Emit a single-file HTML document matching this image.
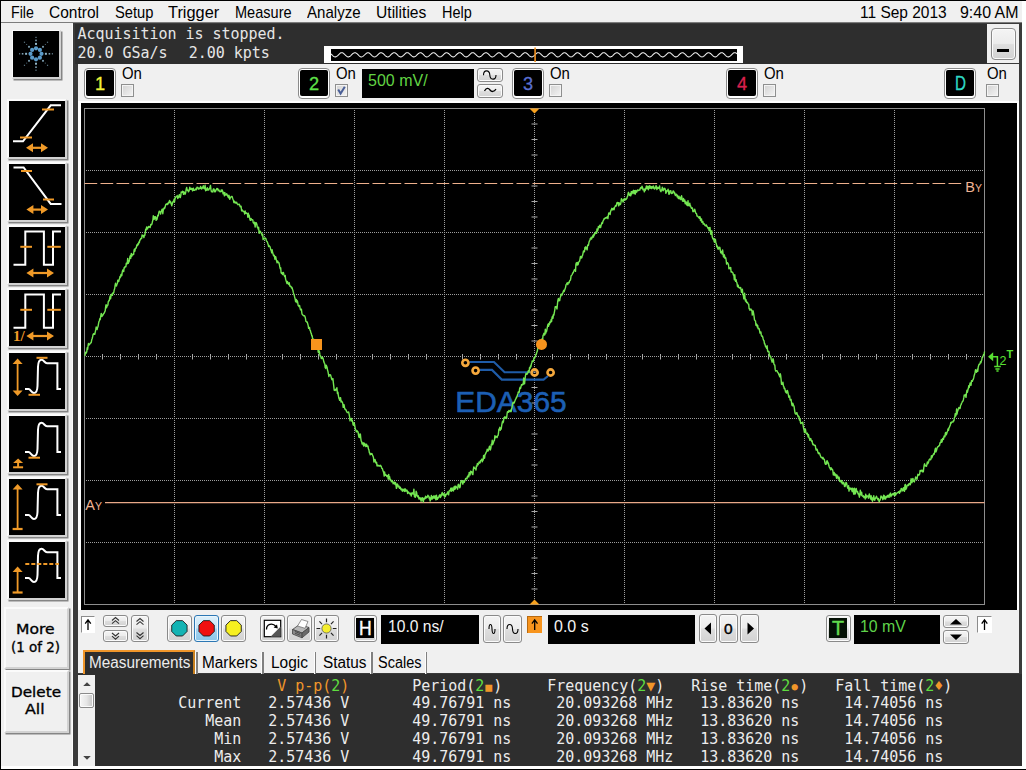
<!DOCTYPE html>
<html lang="en"><head><meta charset="utf-8"><title>Oscilloscope</title>
<style>
*{box-sizing:border-box;margin:0;padding:0}
html,body{width:1026px;height:770px;overflow:hidden;background:#f0f0f0}
body{position:relative;font-family:"Liberation Sans","DejaVu Sans",sans-serif;color:#000;font-size:15px}
.a{position:absolute}
.t{position:absolute;white-space:pre;line-height:1}
.mono{font-family:"DejaVu Sans Mono","Liberation Mono",monospace;font-size:15px;letter-spacing:-0.03px}
.btn{position:absolute;border:1px solid #8a8a8a;border-radius:3px;background:linear-gradient(#f4f4f4 0%,#ececec 48%,#dedede 52%,#d2d2d2 100%);box-shadow:inset 0 0 0 1px #fbfbfb}
.ch{position:absolute;width:32px;height:31px;border:1px solid #8a8a8a;border-radius:4px;background:#fff}
.ch i{position:absolute;left:1px;top:1px;width:28px;height:26px;background:#000;border-radius:2px}
.ch b{position:absolute;left:0;top:3px;width:30px;text-align:center;font-weight:normal;font-size:19px;line-height:22px}
.cb{position:absolute;width:13px;height:13px;border:1px solid #8e8f8f;background:linear-gradient(135deg,#d2d2d2,#f4f4f4);box-shadow:inset 0 0 0 1px #f4f4f4}
.ic{position:absolute;left:7px;width:60px;height:60px;border-left:2px solid #fbfbfb;border-top:2px solid #fbfbfb;border-right:2px solid #d2d2d2;border-bottom:2px solid #d2d2d2;background:#000;box-shadow:1.5px 1.5px 0 #858585}
.ic svg{position:absolute;left:0;top:0}
.sb{position:absolute;left:4px;width:65px;border-left:2px solid #fbfbfb;border-top:2px solid #fbfbfb;border-right:2px solid #d2d2d2;border-bottom:2px solid #d2d2d2;background:#f0f0f0;box-shadow:1.5px 1.5px 0 #858585}
.fld{position:absolute;background:#000;white-space:pre;font-size:16.5px;line-height:1}
.tab{position:absolute;top:650px;height:24px;border-right:2px solid #9a9a9a;font-size:15.5px;line-height:1;white-space:pre}
</style></head>
<body>
<div class="a" style="left:0px;top:0px;width:1026px;height:1px;background:#000;"></div>
<div class="a" style="left:0px;top:0px;width:1px;height:770px;background:#000;"></div>
<div class="a" style="left:0px;top:769px;width:1026px;height:1px;background:#000;"></div>
<div class="a" style="left:1px;top:22px;width:1025px;height:1px;background:#7c7c7c;"></div>
<span class="t" style="left:10.50px;top:3px;font-size:16.2px;color:#000;font-family:'Liberation Sans',sans-serif;line-height:18px;transform:scaleX(0.8775);transform-origin:0 0;">File</span>
<span class="t" style="left:48.70px;top:3px;font-size:16.2px;color:#000;font-family:'Liberation Sans',sans-serif;line-height:18px;transform:scaleX(0.9573);transform-origin:0 0;">Control</span>
<span class="t" style="left:114.50px;top:3px;font-size:16.2px;color:#000;font-family:'Liberation Sans',sans-serif;line-height:18px;transform:scaleX(0.9095);transform-origin:0 0;">Setup</span>
<span class="t" style="left:168.10px;top:3px;font-size:16.2px;color:#000;font-family:'Liberation Sans',sans-serif;line-height:18px;transform:scaleX(1.0097);transform-origin:0 0;">Trigger</span>
<span class="t" style="left:234.70px;top:3px;font-size:16.2px;color:#000;font-family:'Liberation Sans',sans-serif;line-height:18px;transform:scaleX(0.8979);transform-origin:0 0;">Measure</span>
<span class="t" style="left:306.60px;top:3px;font-size:16.2px;color:#000;font-family:'Liberation Sans',sans-serif;line-height:18px;transform:scaleX(0.9299);transform-origin:0 0;">Analyze</span>
<span class="t" style="left:375.60px;top:3px;font-size:16.2px;color:#000;font-family:'Liberation Sans',sans-serif;line-height:18px;transform:scaleX(0.9653);transform-origin:0 0;">Utilities</span>
<span class="t" style="left:441.90px;top:3px;font-size:16.2px;color:#000;font-family:'Liberation Sans',sans-serif;line-height:18px;transform:scaleX(0.8913);transform-origin:0 0;">Help</span>
<span class="t" style="left:860.10px;top:3px;font-size:16.2px;color:#000;font-family:'Liberation Sans',sans-serif;line-height:18px;transform:scaleX(0.9571);transform-origin:0 0;">11 Sep 2013</span>
<span class="t" style="left:959.50px;top:3px;font-size:16.2px;color:#000;font-family:'Liberation Sans',sans-serif;line-height:18px;transform:scaleX(0.9842);transform-origin:0 0;">9:40 AM</span>
<div class="a" style="left:73px;top:23px;width:949px;height:743px;background:#3a3a3a;"></div>
<div class="a" style="left:75px;top:24px;width:912px;height:40px;background:#2e2e2e;"></div>
<div class="a" style="left:987px;top:24px;width:32px;height:38.5px;background:#f0f0f0;"></div>
<div class="a" style="left:1022px;top:1px;width:4px;height:768px;background:#fff;"></div>
<div class="a" style="left:1px;top:766px;width:1025px;height:3px;background:#fff;"></div>
<span class="t" style="left:77.5px;top:25px;font-size:15px;color:#e6e6e6;font-family:'DejaVu Sans Mono','Liberation Mono',monospace;line-height:18px;letter-spacing:-0.03px;">Acquisition is stopped.</span>
<span class="t" style="left:77.5px;top:44px;font-size:15px;color:#e6e6e6;font-family:'DejaVu Sans Mono','Liberation Mono',monospace;line-height:18px;letter-spacing:-0.03px;">20.0 GSa/s</span>
<span class="t" style="left:188.7px;top:44px;font-size:15px;color:#e6e6e6;font-family:'DejaVu Sans Mono','Liberation Mono',monospace;line-height:18px;letter-spacing:-0.03px;">2.00 kpts</span>
<div class="a" style="left:324px;top:46px;width:419px;height:16.5px;background:#fff;"></div>
<div class="a" style="left:331px;top:49px;width:406px;height:11.5px;background:#000;"></div>
<svg class="a" style="left:0;top:0" width="1026" height="70"><polyline points="331.0,53.88 331.5,54.35 332.0,54.85 332.5,55.35 333.0,55.81 333.5,56.22 334.0,56.55 334.5,56.77 335.0,56.89 335.5,56.88 336.0,56.76 336.5,56.52 337.0,56.18 337.5,55.77 338.0,55.30 338.5,54.80 339.0,54.30 339.5,53.83 340.0,53.42 340.5,53.08 341.0,52.84 341.5,52.72 342.0,52.71 342.5,52.83 343.0,53.05 343.5,53.38 344.0,53.79 344.5,54.25 345.0,54.75 345.5,55.25 346.0,55.72 346.5,56.15 347.0,56.49 347.5,56.74 348.0,56.87 348.5,56.89 349.0,56.79 349.5,56.58 350.0,56.26 350.5,55.86 351.0,55.40 351.5,54.90 352.0,54.40 352.5,53.92 353.0,53.49 353.5,53.14 354.0,52.88 354.5,52.73 355.0,52.70 355.5,52.79 356.0,53.00 356.5,53.31 357.0,53.70 357.5,54.16 358.0,54.65 358.5,55.15 359.0,55.63 359.5,56.07 360.0,56.43 360.5,56.70 361.0,56.86 361.5,56.90 362.0,56.82 362.5,56.63 363.0,56.33 363.5,55.94 364.0,55.49 364.5,55.00 365.0,54.50 365.5,54.01 366.0,53.57 366.5,53.20 367.0,52.93 367.5,52.75 368.0,52.70 368.5,52.77 369.0,52.95 369.5,53.24 370.0,53.62 370.5,54.06 371.0,54.55 371.5,55.05 372.0,55.54 372.5,55.98 373.0,56.36 373.5,56.65 374.0,56.83 374.5,56.90 375.0,56.85 375.5,56.67 376.0,56.40 376.5,56.03 377.0,55.59 377.5,55.10 378.0,54.60 378.5,54.11 379.0,53.66 379.5,53.27 380.0,52.97 380.5,52.78 381.0,52.70 381.5,52.74 382.0,52.90 382.5,53.17 383.0,53.53 383.5,53.97 384.0,54.45 384.5,54.95 385.0,55.44 385.5,55.90 386.0,56.29 386.5,56.60 387.0,56.81 387.5,56.90 388.0,56.87 388.5,56.72 389.0,56.46 389.5,56.11 390.0,55.68 390.5,55.20 391.0,54.70 391.5,54.20 392.0,53.74 392.5,53.34 393.0,53.02 393.5,52.81 394.0,52.71 394.5,52.73 395.0,52.86 395.5,53.11 396.0,53.45 396.5,53.88 397.0,54.35 397.5,54.85 398.0,55.35 398.5,55.81 399.0,56.22 399.5,56.55 400.0,56.77 400.5,56.89 401.0,56.88 401.5,56.76 402.0,56.52 402.5,56.18 403.0,55.77 403.5,55.30 404.0,54.80 404.5,54.30 405.0,53.83 405.5,53.42 406.0,53.08 406.5,52.84 407.0,52.72 407.5,52.71 408.0,52.83 408.5,53.05 409.0,53.38 409.5,53.79 410.0,54.25 410.5,54.75 411.0,55.25 411.5,55.72 412.0,56.15 412.5,56.49 413.0,56.74 413.5,56.87 414.0,56.89 414.5,56.79 415.0,56.58 415.5,56.26 416.0,55.86 416.5,55.40 417.0,54.90 417.5,54.40 418.0,53.92 418.5,53.49 419.0,53.14 419.5,52.88 420.0,52.73 420.5,52.70 421.0,52.79 421.5,53.00 422.0,53.31 422.5,53.70 423.0,54.16 423.5,54.65 424.0,55.15 424.5,55.63 425.0,56.07 425.5,56.43 426.0,56.70 426.5,56.86 427.0,56.90 427.5,56.82 428.0,56.63 428.5,56.33 429.0,55.94 429.5,55.49 430.0,55.00 430.5,54.50 431.0,54.01 431.5,53.57 432.0,53.20 432.5,52.93 433.0,52.75 433.5,52.70 434.0,52.77 434.5,52.95 435.0,53.24 435.5,53.62 436.0,54.06 436.5,54.55 437.0,55.05 437.5,55.54 438.0,55.98 438.5,56.36 439.0,56.65 439.5,56.83 440.0,56.90 440.5,56.85 441.0,56.67 441.5,56.40 442.0,56.03 442.5,55.59 443.0,55.10 443.5,54.60 444.0,54.11 444.5,53.66 445.0,53.27 445.5,52.97 446.0,52.78 446.5,52.70 447.0,52.74 447.5,52.90 448.0,53.17 448.5,53.53 449.0,53.97 449.5,54.45 450.0,54.95 450.5,55.44 451.0,55.90 451.5,56.29 452.0,56.60 452.5,56.81 453.0,56.90 453.5,56.87 454.0,56.72 454.5,56.46 455.0,56.11 455.5,55.68 456.0,55.20 456.5,54.70 457.0,54.20 457.5,53.74 458.0,53.34 458.5,53.02 459.0,52.81 459.5,52.71 460.0,52.73 460.5,52.86 461.0,53.11 461.5,53.45 462.0,53.88 462.5,54.35 463.0,54.85 463.5,55.35 464.0,55.81 464.5,56.22 465.0,56.55 465.5,56.77 466.0,56.89 466.5,56.88 467.0,56.76 467.5,56.52 468.0,56.18 468.5,55.77 469.0,55.30 469.5,54.80 470.0,54.30 470.5,53.83 471.0,53.42 471.5,53.08 472.0,52.84 472.5,52.72 473.0,52.71 473.5,52.83 474.0,53.05 474.5,53.38 475.0,53.79 475.5,54.25 476.0,54.75 476.5,55.25 477.0,55.72 477.5,56.15 478.0,56.49 478.5,56.74 479.0,56.87 479.5,56.89 480.0,56.79 480.5,56.58 481.0,56.26 481.5,55.86 482.0,55.40 482.5,54.90 483.0,54.40 483.5,53.92 484.0,53.49 484.5,53.14 485.0,52.88 485.5,52.73 486.0,52.70 486.5,52.79 487.0,53.00 487.5,53.31 488.0,53.70 488.5,54.16 489.0,54.65 489.5,55.15 490.0,55.63 490.5,56.07 491.0,56.43 491.5,56.70 492.0,56.86 492.5,56.90 493.0,56.82 493.5,56.63 494.0,56.33 494.5,55.94 495.0,55.49 495.5,55.00 496.0,54.50 496.5,54.01 497.0,53.57 497.5,53.20 498.0,52.93 498.5,52.75 499.0,52.70 499.5,52.77 500.0,52.95 500.5,53.24 501.0,53.62 501.5,54.06 502.0,54.55 502.5,55.05 503.0,55.54 503.5,55.98 504.0,56.36 504.5,56.65 505.0,56.83 505.5,56.90 506.0,56.85 506.5,56.67 507.0,56.40 507.5,56.03 508.0,55.59 508.5,55.10 509.0,54.60 509.5,54.11 510.0,53.66 510.5,53.27 511.0,52.97 511.5,52.78 512.0,52.70 512.5,52.74 513.0,52.90 513.5,53.17 514.0,53.53 514.5,53.97 515.0,54.45 515.5,54.95 516.0,55.44 516.5,55.90 517.0,56.29 517.5,56.60 518.0,56.81 518.5,56.90 519.0,56.87 519.5,56.72 520.0,56.46 520.5,56.11 521.0,55.68 521.5,55.20 522.0,54.70 522.5,54.20 523.0,53.74 523.5,53.34 524.0,53.02 524.5,52.81 525.0,52.71 525.5,52.73 526.0,52.86 526.5,53.11 527.0,53.45 527.5,53.88 528.0,54.35 528.5,54.85 529.0,55.35 529.5,55.81 530.0,56.22 530.5,56.55 531.0,56.77 531.5,56.89 532.0,56.88 532.5,56.76 533.0,56.52 533.5,56.18 534.0,55.77 534.5,55.30 535.0,54.80 535.5,54.30 536.0,53.83 536.5,53.42 537.0,53.08 537.5,52.84 538.0,52.72 538.5,52.71 539.0,52.83 539.5,53.05 540.0,53.38 540.5,53.79 541.0,54.25 541.5,54.75 542.0,55.25 542.5,55.72 543.0,56.15 543.5,56.49 544.0,56.74 544.5,56.87 545.0,56.89 545.5,56.79 546.0,56.58 546.5,56.26 547.0,55.86 547.5,55.40 548.0,54.90 548.5,54.40 549.0,53.92 549.5,53.49 550.0,53.14 550.5,52.88 551.0,52.73 551.5,52.70 552.0,52.79 552.5,53.00 553.0,53.31 553.5,53.70 554.0,54.16 554.5,54.65 555.0,55.15 555.5,55.63 556.0,56.07 556.5,56.43 557.0,56.70 557.5,56.86 558.0,56.90 558.5,56.82 559.0,56.63 559.5,56.33 560.0,55.94 560.5,55.49 561.0,55.00 561.5,54.50 562.0,54.01 562.5,53.57 563.0,53.20 563.5,52.93 564.0,52.75 564.5,52.70 565.0,52.77 565.5,52.95 566.0,53.24 566.5,53.62 567.0,54.06 567.5,54.55 568.0,55.05 568.5,55.54 569.0,55.98 569.5,56.36 570.0,56.65 570.5,56.83 571.0,56.90 571.5,56.85 572.0,56.67 572.5,56.40 573.0,56.03 573.5,55.59 574.0,55.10 574.5,54.60 575.0,54.11 575.5,53.66 576.0,53.27 576.5,52.97 577.0,52.78 577.5,52.70 578.0,52.74 578.5,52.90 579.0,53.17 579.5,53.53 580.0,53.97 580.5,54.45 581.0,54.95 581.5,55.44 582.0,55.90 582.5,56.29 583.0,56.60 583.5,56.81 584.0,56.90 584.5,56.87 585.0,56.72 585.5,56.46 586.0,56.11 586.5,55.68 587.0,55.20 587.5,54.70 588.0,54.20 588.5,53.74 589.0,53.34 589.5,53.02 590.0,52.81 590.5,52.71 591.0,52.73 591.5,52.86 592.0,53.11 592.5,53.45 593.0,53.88 593.5,54.35 594.0,54.85 594.5,55.35 595.0,55.81 595.5,56.22 596.0,56.55 596.5,56.77 597.0,56.89 597.5,56.88 598.0,56.76 598.5,56.52 599.0,56.18 599.5,55.77 600.0,55.30 600.5,54.80 601.0,54.30 601.5,53.83 602.0,53.42 602.5,53.08 603.0,52.84 603.5,52.72 604.0,52.71 604.5,52.83 605.0,53.05 605.5,53.38 606.0,53.79 606.5,54.25 607.0,54.75 607.5,55.25 608.0,55.72 608.5,56.15 609.0,56.49 609.5,56.74 610.0,56.87 610.5,56.89 611.0,56.79 611.5,56.58 612.0,56.26 612.5,55.86 613.0,55.40 613.5,54.90 614.0,54.40 614.5,53.92 615.0,53.49 615.5,53.14 616.0,52.88 616.5,52.73 617.0,52.70 617.5,52.79 618.0,53.00 618.5,53.31 619.0,53.70 619.5,54.16 620.0,54.65 620.5,55.15 621.0,55.63 621.5,56.07 622.0,56.43 622.5,56.70 623.0,56.86 623.5,56.90 624.0,56.82 624.5,56.63 625.0,56.33 625.5,55.94 626.0,55.49 626.5,55.00 627.0,54.50 627.5,54.01 628.0,53.57 628.5,53.20 629.0,52.93 629.5,52.75 630.0,52.70 630.5,52.77 631.0,52.95 631.5,53.24 632.0,53.62 632.5,54.06 633.0,54.55 633.5,55.05 634.0,55.54 634.5,55.98 635.0,56.36 635.5,56.65 636.0,56.83 636.5,56.90 637.0,56.85 637.5,56.67 638.0,56.40 638.5,56.03 639.0,55.59 639.5,55.10 640.0,54.60 640.5,54.11 641.0,53.66 641.5,53.27 642.0,52.97 642.5,52.78 643.0,52.70 643.5,52.74 644.0,52.90 644.5,53.17 645.0,53.53 645.5,53.97 646.0,54.45 646.5,54.95 647.0,55.44 647.5,55.90 648.0,56.29 648.5,56.60 649.0,56.81 649.5,56.90 650.0,56.87 650.5,56.72 651.0,56.46 651.5,56.11 652.0,55.68 652.5,55.20 653.0,54.70 653.5,54.20 654.0,53.74 654.5,53.34 655.0,53.02 655.5,52.81 656.0,52.71 656.5,52.73 657.0,52.86 657.5,53.11 658.0,53.45 658.5,53.88 659.0,54.35 659.5,54.85 660.0,55.35 660.5,55.81 661.0,56.22 661.5,56.55 662.0,56.77 662.5,56.89 663.0,56.88 663.5,56.76 664.0,56.52 664.5,56.18 665.0,55.77 665.5,55.30 666.0,54.80 666.5,54.30 667.0,53.83 667.5,53.42 668.0,53.08 668.5,52.84 669.0,52.72 669.5,52.71 670.0,52.83 670.5,53.05 671.0,53.38 671.5,53.79 672.0,54.25 672.5,54.75 673.0,55.25 673.5,55.72 674.0,56.15 674.5,56.49 675.0,56.74 675.5,56.87 676.0,56.89 676.5,56.79 677.0,56.58 677.5,56.26 678.0,55.86 678.5,55.40 679.0,54.90 679.5,54.40 680.0,53.92 680.5,53.49 681.0,53.14 681.5,52.88 682.0,52.73 682.5,52.70 683.0,52.79 683.5,53.00 684.0,53.31 684.5,53.70 685.0,54.16 685.5,54.65 686.0,55.15 686.5,55.63 687.0,56.07 687.5,56.43 688.0,56.70 688.5,56.86 689.0,56.90 689.5,56.82 690.0,56.63 690.5,56.33 691.0,55.94 691.5,55.49 692.0,55.00 692.5,54.50 693.0,54.01 693.5,53.57 694.0,53.20 694.5,52.93 695.0,52.75 695.5,52.70 696.0,52.77 696.5,52.95 697.0,53.24 697.5,53.62 698.0,54.06 698.5,54.55 699.0,55.05 699.5,55.54 700.0,55.98 700.5,56.36 701.0,56.65 701.5,56.83 702.0,56.90 702.5,56.85 703.0,56.67 703.5,56.40 704.0,56.03 704.5,55.59 705.0,55.10 705.5,54.60 706.0,54.11 706.5,53.66 707.0,53.27 707.5,52.97 708.0,52.78 708.5,52.70 709.0,52.74 709.5,52.90 710.0,53.17 710.5,53.53 711.0,53.97 711.5,54.45 712.0,54.95 712.5,55.44 713.0,55.90 713.5,56.29 714.0,56.60 714.5,56.81 715.0,56.90 715.5,56.87 716.0,56.72 716.5,56.46 717.0,56.11 717.5,55.68 718.0,55.20 718.5,54.70 719.0,54.20 719.5,53.74 720.0,53.34 720.5,53.02 721.0,52.81 721.5,52.71 722.0,52.73 722.5,52.86 723.0,53.11 723.5,53.45 724.0,53.88 724.5,54.35 725.0,54.85 725.5,55.35 726.0,55.81 726.5,56.22 727.0,56.55 727.5,56.77 728.0,56.89 728.5,56.88 729.0,56.76 729.5,56.52 730.0,56.18 730.5,55.77 731.0,55.30 731.5,54.80 732.0,54.30 732.5,53.83 733.0,53.42 733.5,53.08 734.0,52.84 734.5,52.72 735.0,52.71 735.5,52.83 736.0,53.05 736.5,53.38 737.0,53.79" fill="none" stroke="#f0f0f0" stroke-width="1.05"/><rect x="534.3" y="47.5" width="1.6" height="14.5" fill="#f09020"/></svg>
<div class="btn" style="left:991px;top:28px;width:25px;height:32px;border-radius:4px"></div>
<div class="a" style="left:997px;top:49px;width:12px;height:3px;background:#000;"></div>
<div class="a" style="left:72px;top:24px;width:1px;height:742px;background:#fbfbfb;"></div>
<div class="ic" style="left:12px;top:30px;width:49px;height:49px;border-left-width:1px;border-top-width:1px"><svg width="47" height="47" viewBox="0 0 47 47"><circle cx="23.00" cy="17.30" r="2.1" fill="#5b9bc9"/><circle cx="19.11" cy="18.91" r="2.1" fill="#5b9bc9"/><circle cx="17.50" cy="22.80" r="2.1" fill="#5b9bc9"/><circle cx="19.11" cy="26.69" r="2.1" fill="#5b9bc9"/><circle cx="23.00" cy="28.30" r="2.1" fill="#5b9bc9"/><circle cx="26.89" cy="26.69" r="2.1" fill="#5b9bc9"/><circle cx="28.50" cy="22.80" r="2.1" fill="#5b9bc9"/><circle cx="26.89" cy="18.91" r="2.1" fill="#5b9bc9"/><rect x="22.00" y="11.90" width="2.0" height="2.0" fill="#8fb4c6"/><rect x="22.20" y="8.60" width="1.6" height="1.6" fill="#7fa0b2"/><rect x="22.40" y="5.80" width="1.2" height="1.2" fill="#6b8797"/><rect x="15.10" y="14.90" width="1.8" height="1.8" fill="#7fa0b2"/><rect x="13.17" y="12.97" width="1.0" height="1.0" fill="#4c6572"/><rect x="10.87" y="10.67" width="1.2" height="1.2" fill="#5c7684"/><rect x="12.10" y="21.80" width="2.0" height="2.0" fill="#8fb4c6"/><rect x="8.80" y="22.00" width="1.6" height="1.6" fill="#7fa0b2"/><rect x="6.00" y="22.20" width="1.2" height="1.2" fill="#6b8797"/><rect x="15.10" y="28.90" width="1.8" height="1.8" fill="#7fa0b2"/><rect x="13.17" y="31.63" width="1.0" height="1.0" fill="#4c6572"/><rect x="10.87" y="33.73" width="1.2" height="1.2" fill="#5c7684"/><rect x="22.00" y="31.70" width="2.0" height="2.0" fill="#8fb4c6"/><rect x="22.20" y="35.40" width="1.6" height="1.6" fill="#7fa0b2"/><rect x="22.40" y="38.60" width="1.2" height="1.2" fill="#6b8797"/><rect x="29.10" y="28.90" width="1.8" height="1.8" fill="#7fa0b2"/><rect x="31.83" y="31.63" width="1.0" height="1.0" fill="#4c6572"/><rect x="33.93" y="33.73" width="1.2" height="1.2" fill="#5c7684"/><rect x="31.90" y="21.80" width="2.0" height="2.0" fill="#8fb4c6"/><rect x="35.60" y="22.00" width="1.6" height="1.6" fill="#7fa0b2"/><rect x="38.80" y="22.20" width="1.2" height="1.2" fill="#6b8797"/><rect x="29.10" y="14.90" width="1.8" height="1.8" fill="#7fa0b2"/><rect x="31.83" y="12.97" width="1.0" height="1.0" fill="#4c6572"/><rect x="33.93" y="10.67" width="1.2" height="1.2" fill="#5c7684"/></svg></div>
<div class="ic" style="top:99px"><svg width="56" height="55" viewBox="0 0 56 55"><path d="M4 40.3H14L41.7 4.3H52" stroke="#fff" stroke-width="2" fill="none" stroke-linejoin="miter"/><path d="M33 8.5H45" stroke="#f09a28" stroke-width="2" fill="none"/><path d="M11 36.5H23" stroke="#f09a28" stroke-width="2" fill="none"/><path d="M23 46.8H33" stroke="#f09a28" stroke-width="2.2" fill="none"/><path d="M17 46.8L24 42.3V51.3Z M39 46.8L32 42.3V51.3Z" fill="#f09a28"/></svg></div>
<div class="ic" style="top:162px"><svg width="56" height="55" viewBox="0 0 56 55"><path d="M4.5 3.4H14.6L41.7 39.9H52.5" stroke="#fff" stroke-width="2" fill="none" stroke-linejoin="miter"/><path d="M12 7H23" stroke="#f09a28" stroke-width="2" fill="none"/><path d="M34 35.5H45" stroke="#f09a28" stroke-width="2" fill="none"/><path d="M23.4 45.6H33" stroke="#f09a28" stroke-width="2.2" fill="none"/><path d="M17.4 45.6L24.4 41.1V50.1Z M39 45.6L32 41.1V50.1Z" fill="#f09a28"/></svg></div>
<div class="ic" style="top:225px"><svg width="56" height="55" viewBox="0 0 56 55"><path d="M4.5 37.7H16.3V4.6H34.9V37.7H44V4.6H52" stroke="#fff" stroke-width="2" fill="none" stroke-linejoin="miter"/><path d="M11.3 19.8H23" stroke="#f09a28" stroke-width="2" fill="none"/><path d="M38.3 19.8H51.8" stroke="#f09a28" stroke-width="2" fill="none"/><path d="M23.4 46H39" stroke="#f09a28" stroke-width="2.2" fill="none"/><path d="M17.4 46L24.4 41.5V50.5Z M45 46L38 41.5V50.5Z" fill="#f09a28"/></svg></div>
<div class="ic" style="top:288px"><svg width="56" height="55" viewBox="0 0 56 55"><path d="M4.5 37.7H16.3V4.6H34.9V37.7H44V4.6H52" stroke="#fff" stroke-width="2" fill="none" stroke-linejoin="miter"/><path d="M11.3 19.8H23" stroke="#f09a28" stroke-width="2" fill="none"/><path d="M38.3 19.8H51.8" stroke="#f09a28" stroke-width="2" fill="none"/><path d="M23.4 46H39" stroke="#f09a28" stroke-width="2.2" fill="none"/><path d="M17.4 46L24.4 41.5V50.5Z M45 46L38 41.5V50.5Z" fill="#f09a28"/><text x="4" y="51" font-family="Liberation Serif,serif" font-weight="bold" font-size="15" fill="#f09a28">1/</text></svg></div>
<div class="ic" style="top:351px"><svg width="56" height="55" viewBox="0 0 56 55"><path d="M16 36 H19.5 C21.5 36 22.5 40 25 40 C27.5 40 28.3 38 28.5 33 L29 14 C29.2 8 30.5 6.7 32.5 6.7 C35 6.7 35.5 10.3 38 10.3 H48.4 V36 H52" stroke="#fff" stroke-width="2" fill="none" stroke-linejoin="miter"/><path d="M27.5 4.8H38.5" stroke="#f09a28" stroke-width="2" fill="none"/><path d="M19.5 41.8H31" stroke="#f09a28" stroke-width="2" fill="none"/><path d="M8.6 9.5V40" stroke="#f09a28" stroke-width="1.8" fill="none"/><path d="M8.6 5.5L3.5999999999999996 11.0H13.6Z" fill="#f09a28"/><path d="M8.6 43L3.6 37.5H13.6Z" fill="#f09a28"/></svg></div>
<div class="ic" style="top:414px"><svg width="56" height="55" viewBox="0 0 56 55"><path d="M16 36 H19.5 C21.5 36 22.5 40 25 40 C27.5 40 28.3 38 28.5 33 L29 14 C29.2 8 30.5 6.7 32.5 6.7 C35 6.7 35.5 10.3 38 10.3 H48.4 V36 H52" stroke="#fff" stroke-width="2" fill="none" stroke-linejoin="miter"/><path d="M19.5 41.7H31" stroke="#f09a28" stroke-width="2" fill="none"/><path d="M9.1 42.5L4.1 47H14.1Z" fill="#f09a28"/><path d="M9.1 46V51" stroke="#f09a28" stroke-width="2" fill="none"/><path d="M4.1 51.3H14.1" stroke="#f09a28" stroke-width="2" fill="none"/></svg></div>
<div class="ic" style="top:477px"><svg width="56" height="55" viewBox="0 0 56 55"><path d="M16 36 H19.5 C21.5 36 22.5 40 25 40 C27.5 40 28.3 38 28.5 33 L29 14 C29.2 8 30.5 6.7 32.5 6.7 C35 6.7 35.5 10.3 38 10.3 H48.4 V36 H52" stroke="#fff" stroke-width="2" fill="none" stroke-linejoin="miter"/><path d="M27.5 5.3H38.5" stroke="#f09a28" stroke-width="2" fill="none"/><path d="M8.6 9V50" stroke="#f09a28" stroke-width="1.8" fill="none"/><path d="M8.6 5L3.5999999999999996 10.5H13.6Z" fill="#f09a28"/><path d="M3.5999999999999996 50H13.6" stroke="#f09a28" stroke-width="2.2" fill="none"/></svg></div>
<div class="ic" style="top:540px"><svg width="56" height="55" viewBox="0 0 56 55"><path d="M16 36 H19.5 C21.5 36 22.5 40 25 40 C27.5 40 28.3 38 28.5 33 L29 14 C29.2 8 30.5 6.7 32.5 6.7 C35 6.7 35.5 10.3 38 10.3 H48.4 V36 H52" stroke="#fff" stroke-width="2" fill="none" stroke-linejoin="miter"/><path d="M16.3 22H50" stroke="#f09a28" stroke-width="2" stroke-dasharray="4 2" fill="none"/><path d="M8.6 28.5V50.5" stroke="#f09a28" stroke-width="1.8" fill="none"/><path d="M8.6 24.5L3.5999999999999996 30.0H13.6Z" fill="#f09a28"/><path d="M3.5999999999999996 50.5H13.6" stroke="#f09a28" stroke-width="2.2" fill="none"/></svg></div>
<div class="sb" style="top:607px;height:62px"></div>
<div class="sb" style="top:670px;height:63px"></div>
<span class="t" style="left:16.0px;top:621px;font-size:14.3px;color:#000;font-family:'DejaVu Sans','Liberation Sans',sans-serif;transform:scaleX(1.0889);transform-origin:0 0;line-height:16px;-webkit-text-stroke:0.35px #000;">More</span>
<span class="t" style="left:11.0px;top:639px;font-size:14.3px;color:#000;font-family:'DejaVu Sans','Liberation Sans',sans-serif;transform:scaleX(0.9382);transform-origin:0 0;line-height:16px;-webkit-text-stroke:0.35px #000;">(1 of 2)</span>
<span class="t" style="left:11.0px;top:684px;font-size:14.3px;color:#000;font-family:'DejaVu Sans','Liberation Sans',sans-serif;transform:scaleX(1.0642);transform-origin:0 0;line-height:16px;-webkit-text-stroke:0.35px #000;">Delete</span>
<span class="t" style="left:25.0px;top:701px;font-size:14.3px;color:#000;font-family:'DejaVu Sans','Liberation Sans',sans-serif;transform:scaleX(1.1056);transform-origin:0 0;line-height:16px;-webkit-text-stroke:0.35px #000;">All</span>
<div class="a" style="left:78px;top:64px;width:941px;height:37px;background:#f0f0f0;"></div>
<div class="ch" style="left:84px;top:68px"><i></i></div>
<span class="t" style="left:94.9px;top:74px;font-size:18.2px;color:#f2f23a;font-family:'Liberation Sans',sans-serif;line-height:20px;-webkit-text-stroke:0.3px #f2f23a;">1</span>
<span class="t" style="left:121.90px;top:64px;font-size:16.6px;color:#000;font-family:'Liberation Sans',sans-serif;line-height:19px;transform:scaleX(0.8986);transform-origin:0 0;">On</span>
<div class="cb" style="left:121px;top:84px"></div>
<div class="ch" style="left:298px;top:68px"><i></i></div>
<span class="t" style="left:308.9px;top:74px;font-size:18.2px;color:#5fe048;font-family:'Liberation Sans',sans-serif;line-height:20px;-webkit-text-stroke:0.3px #5fe048;">2</span>
<span class="t" style="left:335.90px;top:64px;font-size:16.6px;color:#000;font-family:'Liberation Sans',sans-serif;line-height:19px;transform:scaleX(0.8986);transform-origin:0 0;">On</span>
<div class="cb" style="left:335px;top:84px"><svg width="11" height="11" viewBox="0 0 11 11" style="position:absolute;left:0;top:0"><path d="M2.2 4.6L4.6 8.6L8.8 1.8" stroke="#4a5f97" stroke-width="2" fill="none"/></svg></div>
<div class="ch" style="left:512px;top:68px"><i></i></div>
<span class="t" style="left:522.9px;top:74px;font-size:18.2px;color:#5a6fd0;font-family:'Liberation Sans',sans-serif;line-height:20px;-webkit-text-stroke:0.3px #5a6fd0;">3</span>
<span class="t" style="left:549.90px;top:64px;font-size:16.6px;color:#000;font-family:'Liberation Sans',sans-serif;line-height:19px;transform:scaleX(0.8986);transform-origin:0 0;">On</span>
<div class="cb" style="left:549px;top:84px"></div>
<div class="ch" style="left:726px;top:68px"><i></i></div>
<span class="t" style="left:736.9px;top:74px;font-size:18.2px;color:#d8204c;font-family:'Liberation Sans',sans-serif;line-height:20px;-webkit-text-stroke:0.3px #d8204c;">4</span>
<span class="t" style="left:763.90px;top:64px;font-size:16.6px;color:#000;font-family:'Liberation Sans',sans-serif;line-height:19px;transform:scaleX(0.8986);transform-origin:0 0;">On</span>
<div class="cb" style="left:763px;top:84px"></div>
<div class="ch" style="left:944px;top:68px"><i></i></div>
<span class="t" style="left:954.60px;top:72px;font-size:19.5px;color:#2fd8c4;font-family:'Liberation Sans',sans-serif;line-height:22px;transform:scaleX(0.7813);transform-origin:0 0;-webkit-text-stroke:0.3px #2fd8c4;">D</span>
<span class="t" style="left:986.90px;top:64px;font-size:16.6px;color:#000;font-family:'Liberation Sans',sans-serif;line-height:19px;transform:scaleX(0.8986);transform-origin:0 0;">On</span>
<div class="cb" style="left:986px;top:84px"></div>
<div class="a" style="left:362px;top:69px;width:112px;height:29px;background:#000;"></div>
<span class="t" style="left:367.80px;top:71px;font-size:16.3px;color:#62d444;font-family:'Liberation Sans',sans-serif;line-height:18px;transform:scaleX(0.9835);transform-origin:0 0;">500 mV/</span>
<div class="btn" style="left:477px;top:68px;width:26px;height:14px;border-radius:3px"></div>
<div class="btn" style="left:477px;top:84px;width:26px;height:14px;border-radius:3px"></div>
<svg class="a" style="left:477px;top:68px" width="26" height="30" viewBox="0 0 26 30"><path d="M6.5 7.2C6.5 1.5 12.5 1.5 12.8 7 C13.1 12.5 19 12.5 19 7" stroke="#000" stroke-width="1.1" fill="none"/><path d="M7.5 23C9.5 19.5 11.5 20 13 22 C14.5 24 17 24.2 19 21.2" stroke="#000" stroke-width="1.3" fill="none"/></svg>
<div class="a" style="left:78px;top:101px;width:941px;height:2px;background:#fff;"></div>
<div class="a" style="left:78px;top:103px;width:3px;height:507px;background:#fff;"></div>
<div class="a" style="left:1017px;top:103px;width:2px;height:507px;background:#fff;"></div>
<div class="a" style="left:80.5px;top:102.5px;width:936.5px;height:507px;background:#000;"></div>
<svg class="a" style="left:0;top:0" width="1026" height="620" viewBox="0 0 1026 620"><g stroke="#9e9e9e" stroke-width="1" stroke-dasharray="1 1" fill="none"><path d="M174.5 110.0V604.5"/><path d="M264.5 110.0V604.5"/><path d="M354.5 110.0V604.5"/><path d="M444.5 110.0V604.5"/><path d="M534.5 110.0V604.5"/><path d="M624.5 110.0V604.5"/><path d="M714.5 110.0V604.5"/><path d="M804.5 110.0V604.5"/><path d="M894.5 110.0V604.5"/><path d="M86.0 170.5H984.5"/><path d="M86.0 232.5H984.5"/><path d="M86.0 294.5H984.5"/><path d="M86.0 356.5H984.5"/><path d="M86.0 418.5H984.5"/><path d="M86.0 480.5H984.5"/><path d="M86.0 542.5H984.5"/></g><path d="M102.5 354.0v5.5M120.5 354.0v5.5M138.5 354.0v5.5M156.5 354.0v5.5M192.5 354.0v5.5M210.5 354.0v5.5M228.5 354.0v5.5M246.5 354.0v5.5M282.5 354.0v5.5M300.5 354.0v5.5M318.5 354.0v5.5M336.5 354.0v5.5M372.5 354.0v5.5M390.5 354.0v5.5M408.5 354.0v5.5M426.5 354.0v5.5M462.5 354.0v5.5M480.5 354.0v5.5M498.5 354.0v5.5M516.5 354.0v5.5M552.5 354.0v5.5M570.5 354.0v5.5M588.5 354.0v5.5M606.5 354.0v5.5M642.5 354.0v5.5M660.5 354.0v5.5M678.5 354.0v5.5M696.5 354.0v5.5M732.5 354.0v5.5M750.5 354.0v5.5M768.5 354.0v5.5M786.5 354.0v5.5M822.5 354.0v5.5M840.5 354.0v5.5M858.5 354.0v5.5M876.5 354.0v5.5M912.5 354.0v5.5M930.5 354.0v5.5M948.5 354.0v5.5M966.5 354.0v5.5M531.5 124.0h6M531.5 139.5h6M531.5 155.0h6M531.5 186.0h6M531.5 201.5h6M531.5 217.0h6M531.5 248.0h6M531.5 263.5h6M531.5 279.0h6M531.5 310.0h6M531.5 325.5h6M531.5 341.0h6M531.5 372.0h6M531.5 387.5h6M531.5 403.0h6M531.5 434.0h6M531.5 449.5h6M531.5 465.0h6M531.5 496.0h6M531.5 511.5h6M531.5 527.0h6M531.5 558.0h6M531.5 573.5h6M531.5 589.0h6" stroke="#a8a8a8" stroke-width="1" fill="none"/><rect x="84.5" y="108.5" width="900" height="496" fill="none" stroke="#8e8e8e" stroke-width="1"/><path d="M84.5 183.5H962" stroke="#eeb08c" stroke-width="1.2" stroke-dasharray="12.7 3.3" fill="none"/><path d="M105 502.6H984.5" stroke="#e8a888" stroke-width="1.3" fill="none"/><text x="965.3" y="192" font-family="Liberation Sans,sans-serif" font-size="14.5" fill="#f0b494">B<tspan font-size="10.5">Y</tspan></text><text x="85.3" y="510" font-family="Liberation Sans,sans-serif" font-size="14.5" fill="#f0b494">A<tspan font-size="10.5">Y</tspan></text><g fill="none" stroke="#1f5ca8" stroke-width="2.1" stroke-linejoin="miter"><path d="M469.5 362H494L504.6 372.2H530.5"/><path d="M479.8 369.9H492L501.8 379.6H543.6L548 376"/></g><circle cx="465.4" cy="362.8" r="3.1" fill="none" stroke="#f5a83c" stroke-width="2.6"/><circle cx="475.6" cy="370.6" r="3.1" fill="none" stroke="#f5a83c" stroke-width="2.6"/><circle cx="534.6" cy="372.5" r="3.1" fill="none" stroke="#f5a83c" stroke-width="2.6"/><circle cx="550.6" cy="372.5" r="3.1" fill="none" stroke="#f5a83c" stroke-width="2.6"/><text x="0" y="0" transform="translate(455.3 412) scale(1.0148 1)" font-family="Liberation Sans,sans-serif" font-size="29.5" fill="#1c5fb4" stroke="#1c5fb4" stroke-width="0.6">EDA365</text><polyline fill="none" stroke="#74e652" stroke-width="1.4" stroke-linejoin="round" points="84.5,355.6 85.0,355.5 85.4,352.8 85.8,352.2 86.3,353.1 86.8,351.6 87.2,347.7 87.7,349.3 88.1,345.5 88.5,343.4 89.0,345.0 89.5,344.4 89.9,344.0 90.3,343.3 90.8,342.7 91.2,342.7 91.7,339.8 92.2,338.5 92.6,336.9 93.0,334.9 93.5,333.8 94.0,334.2 94.4,333.4 94.8,334.3 95.3,331.9 95.8,329.4 96.2,326.9 96.7,328.7 97.1,329.5 97.5,327.6 98.0,326.7 98.5,323.9 98.9,321.7 99.3,321.0 99.8,318.7 100.2,319.7 100.7,316.3 101.2,313.5 101.6,314.0 102.0,316.5 102.5,315.7 103.0,315.0 103.4,314.2 103.8,313.4 104.3,313.0 104.8,311.6 105.2,310.9 105.7,306.2 106.1,304.6 106.5,307.7 107.0,306.2 107.5,305.5 107.9,305.1 108.3,301.5 108.8,300.7 109.2,300.8 109.7,298.2 110.2,296.0 110.6,298.7 111.0,296.2 111.5,294.1 112.0,295.0 112.4,295.3 112.8,293.0 113.3,293.3 113.8,292.4 114.2,289.9 114.7,288.5 115.1,285.3 115.5,283.3 116.0,285.9 116.5,286.1 116.9,284.1 117.3,283.9 117.8,280.2 118.2,280.9 118.7,281.5 119.2,279.4 119.6,278.6 120.0,276.4 120.5,277.2 121.0,274.5 121.4,274.7 121.8,275.7 122.3,271.7 122.8,270.0 123.2,270.6 123.7,271.6 124.1,267.6 124.5,268.0 125.0,266.6 125.5,266.6 125.9,266.7 126.3,263.2 126.8,264.1 127.2,263.7 127.7,258.4 128.2,263.4 128.6,262.3 129.1,261.6 129.5,259.7 129.9,256.8 130.4,255.6 130.8,258.2 131.3,253.5 131.8,256.2 132.2,255.2 132.7,254.3 133.1,254.5 133.6,254.6 134.0,250.8 134.4,249.3 134.9,251.2 135.3,248.6 135.8,248.0 136.2,248.1 136.7,245.6 137.2,244.6 137.6,245.5 138.1,243.5 138.5,244.2 138.9,241.9 139.4,242.4 139.8,239.9 140.3,239.9 140.8,238.5 141.2,238.7 141.7,238.3 142.1,234.9 142.6,236.0 143.0,235.8 143.4,235.5 143.9,237.5 144.3,235.3 144.8,235.5 145.2,232.9 145.7,229.2 146.2,229.9 146.6,227.0 147.1,228.0 147.5,229.1 147.9,227.7 148.4,226.4 148.8,227.3 149.3,226.7 149.8,227.0 150.2,227.4 150.7,224.5 151.1,224.9 151.6,224.8 152.0,223.8 152.4,221.8 152.9,220.0 153.3,215.8 153.8,218.0 154.2,219.3 154.7,216.7 155.2,218.2 155.6,216.7 156.1,220.4 156.5,218.2 156.9,219.6 157.4,217.5 157.8,215.2 158.3,215.8 158.8,212.6 159.2,211.2 159.7,211.7 160.1,211.5 160.6,214.1 161.0,212.1 161.4,211.3 161.9,209.7 162.3,209.0 162.8,213.7 163.2,210.7 163.7,208.7 164.2,207.7 164.6,208.5 165.1,207.1 165.5,205.3 165.9,204.3 166.4,204.5 166.8,203.7 167.3,204.5 167.8,204.3 168.2,202.8 168.7,203.0 169.1,201.6 169.6,200.4 170.0,202.7 170.4,201.7 170.9,202.3 171.3,204.2 171.8,205.9 172.2,204.0 172.7,202.5 173.2,201.2 173.6,201.7 174.1,199.3 174.5,202.0 174.9,199.4 175.4,197.2 175.8,196.9 176.3,196.9 176.8,196.8 177.2,195.5 177.7,198.5 178.1,196.9 178.6,197.5 179.0,195.5 179.4,194.6 179.9,196.3 180.3,197.5 180.8,195.4 181.2,192.0 181.7,192.4 182.2,192.4 182.6,191.2 183.1,192.1 183.5,194.4 183.9,191.7 184.4,194.1 184.8,192.8 185.3,194.0 185.8,191.7 186.2,189.0 186.7,187.5 187.1,189.9 187.6,190.4 188.0,190.3 188.4,191.9 188.9,191.2 189.3,190.0 189.8,187.2 190.2,189.2 190.7,189.4 191.2,188.3 191.6,189.2 192.1,188.6 192.5,190.8 192.9,190.1 193.4,188.1 193.8,190.2 194.3,190.2 194.8,190.2 195.2,189.8 195.7,189.3 196.1,188.2 196.6,189.7 197.0,187.3 197.4,187.3 197.9,187.5 198.3,188.2 198.8,189.3 199.2,188.2 199.7,188.4 200.2,188.2 200.6,186.5 201.1,188.7 201.5,189.0 201.9,188.9 202.4,187.3 202.8,188.0 203.3,185.8 203.8,188.2 204.2,188.7 204.7,188.9 205.1,185.3 205.6,190.7 206.0,189.4 206.4,188.9 206.9,190.3 207.3,187.6 207.8,189.8 208.2,189.3 208.7,190.0 209.2,188.5 209.6,188.6 210.1,186.9 210.5,185.5 210.9,189.2 211.4,191.7 211.8,191.4 212.3,191.6 212.8,192.1 213.2,189.3 213.7,188.9 214.1,189.1 214.6,191.7 215.0,190.5 215.4,191.7 215.9,190.2 216.3,189.7 216.8,188.6 217.2,189.3 217.7,188.5 218.2,190.8 218.6,189.8 219.1,190.3 219.5,191.1 219.9,191.7 220.4,191.8 220.8,191.0 221.3,189.9 221.8,191.6 222.2,189.9 222.7,191.4 223.1,193.8 223.6,192.7 224.0,192.4 224.4,195.9 224.9,192.7 225.3,195.0 225.8,194.4 226.2,194.9 226.7,193.7 227.2,194.7 227.6,195.7 228.1,197.0 228.5,197.8 228.9,195.3 229.4,196.9 229.8,199.3 230.3,197.7 230.8,197.1 231.2,196.7 231.7,196.5 232.1,196.5 232.6,198.3 233.0,199.3 233.4,200.0 233.9,202.6 234.3,201.2 234.8,201.6 235.2,203.0 235.7,202.5 236.2,203.0 236.6,202.2 237.1,203.7 237.5,204.0 237.9,204.8 238.4,204.5 238.8,204.2 239.3,204.3 239.8,205.6 240.2,206.8 240.7,206.2 241.1,206.2 241.6,210.9 242.0,209.7 242.4,210.8 242.9,210.9 243.3,211.6 243.8,211.3 244.2,211.6 244.7,214.0 245.2,211.0 245.6,213.3 246.1,212.7 246.5,213.4 246.9,213.6 247.4,213.5 247.8,217.3 248.3,213.2 248.8,216.8 249.2,215.1 249.7,218.4 250.1,220.2 250.6,220.4 251.0,218.5 251.4,219.9 251.9,219.5 252.3,219.8 252.8,219.9 253.2,222.6 253.7,223.0 254.2,223.9 254.6,222.2 255.1,227.0 255.5,224.8 255.9,222.6 256.4,223.1 256.9,224.4 257.3,227.1 257.8,227.5 258.2,229.1 258.6,227.2 259.1,233.3 259.6,232.4 260.0,231.2 260.4,231.4 260.9,232.8 261.4,233.1 261.8,234.2 262.2,235.6 262.7,234.2 263.1,239.6 263.6,238.3 264.1,239.0 264.5,238.7 264.9,237.9 265.4,238.1 265.9,238.7 266.3,240.5 266.8,241.4 267.2,241.6 267.6,242.8 268.1,244.4 268.6,246.5 269.0,245.5 269.4,246.2 269.9,246.5 270.4,248.1 270.8,249.9 271.2,250.3 271.7,252.8 272.1,249.7 272.6,252.6 273.1,254.0 273.5,255.7 273.9,255.0 274.4,255.7 274.9,259.2 275.3,256.7 275.8,256.9 276.2,259.3 276.6,260.9 277.1,262.7 277.6,260.9 278.0,261.9 278.4,262.8 278.9,262.6 279.4,264.7 279.8,266.9 280.2,268.7 280.7,267.9 281.1,273.0 281.6,273.3 282.1,272.5 282.5,274.5 282.9,273.6 283.4,272.5 283.9,274.7 284.3,275.6 284.8,276.7 285.2,275.4 285.6,279.1 286.1,280.7 286.6,282.3 287.0,283.5 287.4,281.4 287.9,282.8 288.4,284.1 288.8,284.5 289.2,282.7 289.7,285.4 290.1,286.4 290.6,286.1 291.1,286.9 291.5,288.0 291.9,287.3 292.4,289.1 292.9,290.4 293.3,292.4 293.8,294.0 294.2,294.8 294.6,296.9 295.1,298.7 295.6,301.7 296.0,300.0 296.4,299.5 296.9,302.6 297.4,300.8 297.8,302.8 298.2,305.6 298.7,305.8 299.1,306.6 299.6,305.5 300.1,308.4 300.5,309.9 300.9,309.1 301.4,309.2 301.9,313.5 302.3,314.5 302.8,314.9 303.2,315.4 303.6,315.8 304.1,315.7 304.6,315.7 305.0,316.7 305.4,318.0 305.9,321.4 306.4,321.6 306.8,322.2 307.2,321.9 307.7,323.7 308.1,325.1 308.6,328.3 309.1,327.9 309.5,327.4 309.9,330.0 310.4,330.7 310.9,332.9 311.3,333.5 311.8,335.8 312.2,335.8 312.6,339.2 313.1,340.1 313.6,339.2 314.0,340.8 314.4,340.4 314.9,341.5 315.4,341.3 315.8,344.1 316.2,345.9 316.7,343.5 317.1,343.6 317.6,345.4 318.1,351.5 318.5,352.7 318.9,350.5 319.4,351.3 319.9,354.7 320.3,356.2 320.8,356.3 321.2,358.3 321.6,358.5 322.1,357.1 322.6,358.5 323.0,358.1 323.4,359.9 323.9,362.1 324.4,363.3 324.8,363.9 325.2,367.7 325.7,368.4 326.1,365.2 326.6,366.1 327.1,367.4 327.5,370.1 327.9,371.2 328.4,374.0 328.9,376.5 329.3,374.9 329.8,374.7 330.2,374.7 330.6,375.1 331.1,376.9 331.6,378.7 332.0,379.8 332.4,379.4 332.9,378.6 333.4,383.2 333.8,386.4 334.2,390.3 334.7,390.1 335.1,390.6 335.6,389.3 336.1,389.9 336.5,389.0 336.9,387.7 337.4,393.5 337.9,392.1 338.3,395.1 338.8,398.0 339.2,398.6 339.6,400.4 340.1,397.8 340.6,397.8 341.0,402.0 341.4,401.0 341.9,401.5 342.4,402.3 342.8,403.6 343.2,407.3 343.7,404.6 344.1,404.9 344.6,408.1 345.1,409.6 345.5,409.3 345.9,409.6 346.4,411.1 346.9,411.9 347.3,412.6 347.8,412.5 348.2,412.4 348.6,411.9 349.1,414.1 349.6,417.0 350.0,420.9 350.4,418.7 350.9,419.6 351.4,418.4 351.8,421.1 352.2,420.1 352.7,422.2 353.1,424.9 353.6,425.3 354.1,422.6 354.5,424.2 354.9,426.7 355.4,429.6 355.9,429.8 356.3,431.8 356.8,431.9 357.2,430.8 357.6,431.5 358.1,432.2 358.6,435.9 359.0,437.2 359.4,437.6 359.9,434.0 360.4,434.2 360.8,438.3 361.2,441.0 361.7,441.9 362.1,444.0 362.6,444.1 363.1,442.7 363.5,445.6 363.9,446.2 364.4,443.2 364.9,445.4 365.3,444.1 365.8,446.5 366.2,444.7 366.6,444.3 367.1,446.5 367.6,446.6 368.0,446.0 368.4,448.8 368.9,449.9 369.4,452.9 369.8,453.1 370.2,454.8 370.7,453.4 371.1,454.4 371.6,453.5 372.1,453.8 372.5,454.9 372.9,455.9 373.4,457.3 373.9,462.0 374.3,460.0 374.8,459.4 375.2,460.0 375.6,462.2 376.1,463.2 376.6,462.3 377.0,465.9 377.4,464.9 377.9,466.0 378.4,465.4 378.8,465.7 379.2,466.0 379.7,466.1 380.1,465.2 380.6,466.1 381.1,466.0 381.5,467.3 381.9,468.4 382.4,468.7 382.9,470.6 383.3,471.3 383.8,473.3 384.2,476.1 384.6,472.0 385.1,475.2 385.6,475.2 386.0,474.7 386.4,475.7 386.9,476.6 387.4,476.0 387.8,475.5 388.2,479.1 388.7,474.4 389.1,478.7 389.6,476.7 390.1,479.8 390.5,479.3 390.9,480.1 391.4,481.8 391.9,481.3 392.3,480.6 392.8,482.2 393.2,483.8 393.6,482.3 394.1,482.0 394.6,483.5 395.0,484.4 395.4,482.4 395.9,484.4 396.4,488.4 396.8,487.6 397.2,483.9 397.7,484.6 398.1,485.6 398.6,487.1 399.1,486.2 399.5,488.3 399.9,487.7 400.4,487.3 400.9,489.6 401.3,489.8 401.8,488.9 402.2,490.9 402.6,491.2 403.1,489.2 403.6,489.7 404.0,490.5 404.4,491.4 404.9,488.8 405.4,489.3 405.8,491.2 406.2,490.8 406.7,490.1 407.1,490.4 407.6,493.5 408.1,492.2 408.5,492.0 408.9,493.1 409.4,493.2 409.9,493.1 410.3,494.6 410.8,493.1 411.2,496.0 411.6,494.0 412.1,492.8 412.6,493.0 413.0,494.1 413.4,493.5 413.9,489.2 414.4,496.5 414.8,495.0 415.2,497.4 415.7,496.4 416.1,491.2 416.6,492.4 417.1,495.6 417.5,495.9 417.9,497.1 418.4,495.8 418.9,499.0 419.3,497.7 419.8,498.9 420.2,497.8 420.6,499.1 421.1,501.2 421.6,498.8 422.0,497.6 422.4,497.9 422.9,500.8 423.4,501.9 423.8,498.1 424.2,499.3 424.7,498.1 425.1,498.7 425.6,496.1 426.1,498.0 426.5,496.9 426.9,497.6 427.4,497.0 427.9,495.2 428.3,496.0 428.8,496.1 429.2,498.7 429.6,497.4 430.1,501.0 430.6,499.5 431.0,498.0 431.4,495.4 431.9,499.1 432.4,498.8 432.8,496.6 433.2,497.6 433.7,495.9 434.1,498.3 434.6,497.2 435.1,495.8 435.5,498.4 435.9,499.9 436.4,495.3 436.9,497.2 437.3,499.4 437.8,498.0 438.2,497.5 438.6,497.8 439.1,495.7 439.6,495.6 440.0,494.6 440.4,497.5 440.9,496.7 441.4,495.0 441.8,494.1 442.2,492.4 442.7,494.9 443.1,495.2 443.6,494.1 444.1,493.6 444.5,497.0 444.9,494.6 445.4,496.6 445.9,494.2 446.3,494.7 446.8,493.8 447.2,494.0 447.6,491.9 448.1,492.2 448.6,494.9 449.0,491.7 449.4,490.5 449.9,490.6 450.4,490.3 450.8,488.2 451.2,491.3 451.7,488.5 452.1,487.9 452.6,490.5 453.1,490.0 453.5,490.9 453.9,487.0 454.4,489.3 454.9,486.1 455.3,489.0 455.8,486.1 456.2,486.7 456.6,487.5 457.1,487.8 457.6,489.2 458.0,485.5 458.4,484.3 458.9,484.9 459.4,487.3 459.8,487.8 460.2,486.8 460.7,482.1 461.1,481.4 461.6,480.5 462.1,482.1 462.5,483.1 462.9,484.2 463.4,480.8 463.9,481.8 464.3,482.3 464.8,480.7 465.2,480.1 465.6,478.6 466.1,478.3 466.6,478.1 467.0,478.9 467.4,476.5 467.9,476.9 468.4,474.9 468.8,476.9 469.2,472.4 469.7,474.1 470.1,475.0 470.6,471.3 471.1,471.4 471.5,472.6 471.9,471.9 472.4,474.3 472.9,474.6 473.3,469.6 473.8,466.9 474.2,467.6 474.6,468.6 475.1,468.4 475.6,468.3 476.0,470.0 476.4,465.9 476.9,466.3 477.4,463.4 477.8,464.9 478.2,464.6 478.7,463.3 479.1,461.9 479.6,463.1 480.1,462.9 480.5,460.7 480.9,460.5 481.4,459.8 481.9,459.1 482.3,461.8 482.8,459.9 483.2,460.1 483.6,455.4 484.1,458.3 484.6,458.1 485.0,454.4 485.4,454.3 485.9,452.9 486.4,451.9 486.8,451.3 487.2,449.2 487.7,449.7 488.1,451.0 488.6,450.2 489.1,447.7 489.5,446.1 489.9,449.2 490.4,449.9 490.9,447.8 491.3,444.4 491.8,444.0 492.2,440.3 492.6,444.8 493.1,443.5 493.6,442.2 494.0,440.4 494.4,440.5 494.9,435.8 495.4,437.7 495.8,436.7 496.2,436.5 496.7,436.7 497.1,437.6 497.6,435.8 498.1,435.5 498.5,432.8 498.9,429.2 499.4,428.8 499.9,427.3 500.3,430.3 500.8,428.7 501.2,429.0 501.6,426.1 502.1,423.2 502.6,421.2 503.0,422.7 503.4,421.8 503.9,417.8 504.4,418.2 504.8,416.8 505.2,417.0 505.7,418.3 506.1,417.6 506.6,418.4 507.1,413.7 507.5,411.6 507.9,411.6 508.4,412.2 508.9,410.5 509.3,411.6 509.8,411.5 510.2,410.7 510.6,410.2 511.1,411.7 511.6,408.7 512.0,407.8 512.5,404.0 512.9,402.6 513.4,403.2 513.8,402.1 514.2,402.9 514.7,401.6 515.1,400.4 515.6,399.1 516.0,398.8 516.5,396.9 517.0,397.1 517.4,394.9 517.9,393.7 518.3,391.9 518.8,392.7 519.2,392.3 519.6,388.9 520.1,387.1 520.5,388.5 521.0,386.7 521.5,384.7 521.9,385.3 522.4,384.3 522.8,383.9 523.2,384.5 523.7,378.0 524.1,382.1 524.6,383.8 525.0,379.3 525.5,375.3 526.0,373.3 526.4,374.4 526.9,373.6 527.3,374.1 527.8,372.6 528.2,370.9 528.6,370.8 529.1,372.2 529.5,367.8 530.0,368.5 530.5,366.0 530.9,366.8 531.4,363.8 531.8,363.0 532.2,360.9 532.7,361.0 533.1,361.5 533.6,360.5 534.0,357.8 534.5,358.3 535.0,356.7 535.4,356.7 535.9,354.3 536.3,354.3 536.8,352.1 537.2,351.7 537.6,349.5 538.1,346.9 538.5,346.6 539.0,343.7 539.5,344.4 539.9,340.0 540.4,341.5 540.8,340.1 541.2,341.9 541.7,339.9 542.1,338.6 542.6,340.3 543.0,335.6 543.5,334.5 544.0,333.3 544.4,335.0 544.9,334.6 545.3,329.2 545.8,333.1 546.2,330.6 546.6,331.5 547.1,328.7 547.5,326.4 548.0,324.1 548.5,326.3 548.9,323.4 549.4,324.7 549.8,322.0 550.2,321.9 550.7,322.4 551.1,319.6 551.6,321.3 552.0,317.8 552.5,316.2 553.0,318.3 553.4,314.5 553.9,315.1 554.3,312.6 554.8,309.8 555.2,306.7 555.6,307.3 556.1,306.5 556.5,307.6 557.0,309.0 557.5,303.6 557.9,300.2 558.4,298.4 558.8,300.9 559.2,299.9 559.7,300.6 560.1,297.8 560.6,296.8 561.0,294.2 561.5,294.5 562.0,295.1 562.4,293.3 562.9,293.0 563.3,291.2 563.8,290.2 564.2,291.5 564.6,290.3 565.1,288.8 565.5,287.6 566.0,284.8 566.5,284.0 566.9,283.1 567.4,282.9 567.8,284.5 568.2,282.5 568.7,282.6 569.1,282.7 569.6,280.9 570.0,280.4 570.5,280.0 571.0,276.3 571.4,275.4 571.9,274.9 572.3,274.3 572.8,272.8 573.2,272.9 573.6,271.5 574.1,270.7 574.5,269.6 575.0,269.5 575.5,271.4 575.9,264.3 576.4,262.7 576.8,263.8 577.2,265.0 577.7,262.4 578.1,264.7 578.6,262.3 579.0,261.7 579.5,261.3 580.0,259.1 580.4,256.7 580.9,256.4 581.3,258.0 581.8,257.9 582.2,255.9 582.6,255.4 583.1,252.9 583.5,251.0 584.0,251.9 584.5,251.4 584.9,247.5 585.4,249.1 585.8,246.8 586.2,248.8 586.7,248.0 587.1,249.8 587.6,245.7 588.0,244.7 588.5,245.2 589.0,242.2 589.4,241.0 589.9,240.3 590.3,238.4 590.8,238.9 591.2,237.1 591.6,239.0 592.1,237.3 592.5,237.2 593.0,235.3 593.5,237.1 593.9,234.2 594.4,235.1 594.8,233.3 595.2,233.6 595.7,231.9 596.1,232.7 596.6,233.2 597.0,228.9 597.5,231.0 598.0,229.6 598.4,226.4 598.9,227.8 599.3,227.5 599.8,225.1 600.2,227.4 600.6,227.5 601.1,225.4 601.5,224.0 602.0,222.5 602.5,223.4 602.9,221.4 603.4,220.2 603.8,219.8 604.2,218.5 604.7,218.7 605.1,218.4 605.6,217.8 606.0,217.8 606.5,218.0 607.0,217.0 607.4,216.8 607.9,218.6 608.3,215.3 608.8,213.0 609.2,213.0 609.6,213.4 610.1,214.6 610.5,211.8 611.0,210.3 611.5,209.4 611.9,208.3 612.4,209.9 612.8,209.5 613.2,208.5 613.7,208.2 614.1,209.7 614.6,207.1 615.0,206.6 615.5,205.6 616.0,206.3 616.4,205.2 616.9,203.0 617.3,202.4 617.8,203.4 618.2,202.7 618.6,205.9 619.1,202.6 619.5,204.8 620.0,204.1 620.5,204.4 620.9,202.6 621.4,198.8 621.8,199.2 622.2,200.6 622.7,200.8 623.1,202.0 623.6,199.3 624.0,200.3 624.5,199.2 625.0,198.5 625.4,199.9 625.9,199.4 626.3,199.1 626.8,198.6 627.2,196.9 627.6,196.3 628.1,193.5 628.5,192.3 629.0,194.2 629.5,195.4 629.9,195.5 630.4,193.7 630.8,195.8 631.2,191.7 631.7,194.0 632.1,191.4 632.6,193.0 633.0,191.7 633.5,190.3 634.0,193.6 634.4,190.7 634.9,190.6 635.3,194.1 635.8,190.4 636.2,191.6 636.6,192.2 637.1,190.9 637.5,189.9 638.0,190.6 638.5,190.6 638.9,190.2 639.4,189.9 639.8,190.1 640.2,188.3 640.7,187.5 641.1,188.5 641.6,187.6 642.0,186.2 642.5,187.5 643.0,189.8 643.4,189.3 643.9,189.4 644.3,191.9 644.8,189.0 645.2,190.5 645.6,188.5 646.1,187.3 646.5,186.0 647.0,188.8 647.5,187.7 647.9,186.1 648.4,189.7 648.8,187.7 649.2,186.3 649.7,185.8 650.1,188.3 650.6,186.5 651.0,186.6 651.5,188.6 652.0,186.7 652.4,187.2 652.9,188.1 653.3,185.9 653.8,187.1 654.2,188.7 654.6,189.1 655.1,187.7 655.5,188.0 656.0,185.6 656.5,186.3 656.9,189.6 657.4,188.3 657.8,187.4 658.2,188.3 658.7,188.3 659.1,187.4 659.6,185.9 660.0,189.6 660.5,190.9 661.0,191.7 661.4,189.9 661.9,189.8 662.3,187.3 662.8,190.5 663.2,190.7 663.6,189.8 664.1,188.2 664.5,188.9 665.0,188.6 665.5,190.5 665.9,193.3 666.4,191.9 666.8,190.8 667.2,190.4 667.7,191.0 668.1,189.3 668.6,192.5 669.0,194.4 669.5,193.5 670.0,190.7 670.4,191.6 670.9,190.8 671.3,193.5 671.8,192.9 672.2,193.2 672.6,192.7 673.1,190.9 673.5,191.1 674.0,191.9 674.5,193.7 674.9,193.1 675.4,195.5 675.8,194.5 676.2,194.3 676.7,194.4 677.1,196.8 677.6,195.6 678.0,197.6 678.5,198.6 679.0,196.3 679.4,198.0 679.9,199.0 680.3,197.3 680.8,199.6 681.2,198.1 681.6,195.8 682.1,198.8 682.5,201.0 683.0,201.3 683.5,198.5 683.9,200.6 684.4,201.6 684.8,200.0 685.2,203.7 685.7,202.8 686.1,201.8 686.6,204.8 687.0,202.6 687.5,205.6 688.0,200.6 688.4,205.3 688.9,204.2 689.3,206.0 689.8,203.1 690.2,205.5 690.6,205.8 691.1,207.8 691.5,208.2 692.0,207.7 692.5,208.3 692.9,211.6 693.4,210.5 693.8,211.5 694.2,210.5 694.7,209.2 695.1,210.7 695.6,212.7 696.0,213.4 696.5,213.6 697.0,216.0 697.4,216.2 697.9,216.2 698.3,217.1 698.8,217.6 699.2,218.2 699.6,216.7 700.1,216.9 700.5,220.6 701.0,219.5 701.5,218.9 701.9,222.3 702.4,222.4 702.8,221.4 703.2,224.1 703.7,223.4 704.1,223.8 704.6,224.1 705.0,225.5 705.5,225.9 706.0,225.8 706.4,224.9 706.9,226.5 707.3,226.8 707.8,227.7 708.2,228.6 708.6,227.6 709.1,230.6 709.5,227.6 710.0,227.5 710.5,232.5 710.9,234.4 711.4,231.0 711.8,230.7 712.2,236.7 712.7,238.2 713.1,239.1 713.6,238.6 714.0,240.9 714.5,242.2 715.0,239.1 715.4,239.3 715.9,243.0 716.3,243.7 716.8,246.8 717.2,245.9 717.6,247.9 718.1,249.3 718.5,247.9 719.0,247.1 719.5,248.7 719.9,247.5 720.4,250.6 720.8,252.9 721.2,252.3 721.7,251.6 722.1,254.0 722.6,249.9 723.0,253.1 723.5,257.0 724.0,255.7 724.4,254.8 724.9,258.2 725.3,257.4 725.8,258.0 726.2,260.5 726.6,264.1 727.1,263.6 727.5,262.7 728.0,263.5 728.5,264.8 728.9,268.7 729.4,267.6 729.8,268.3 730.2,268.9 730.7,267.5 731.1,272.0 731.6,271.8 732.0,271.9 732.5,272.5 733.0,273.0 733.4,275.1 733.9,275.2 734.3,279.8 734.8,274.8 735.2,279.5 735.6,281.3 736.1,279.6 736.5,282.0 737.0,282.9 737.5,286.7 737.9,284.9 738.4,285.8 738.8,287.6 739.2,287.6 739.7,287.6 740.1,288.5 740.6,287.5 741.0,289.1 741.5,292.4 742.0,290.9 742.4,289.2 742.9,294.6 743.3,294.5 743.8,298.8 744.2,296.5 744.6,293.3 745.1,299.0 745.5,301.0 746.0,299.7 746.5,302.5 746.9,302.3 747.4,302.2 747.8,303.3 748.2,304.0 748.7,304.2 749.1,308.7 749.6,308.8 750.0,310.2 750.5,309.5 751.0,309.1 751.4,310.2 751.9,310.1 752.3,315.1 752.8,313.5 753.2,311.0 753.6,313.4 754.1,316.7 754.5,319.9 755.0,320.5 755.5,321.0 755.9,325.3 756.4,323.9 756.8,324.4 757.2,327.0 757.7,325.5 758.1,328.7 758.6,328.4 759.0,328.4 759.5,330.3 760.0,333.1 760.4,331.9 760.9,332.0 761.3,335.2 761.8,336.3 762.2,336.0 762.6,336.6 763.1,338.7 763.5,340.1 764.0,340.7 764.5,343.9 764.9,343.8 765.4,346.2 765.8,346.7 766.2,347.4 766.7,348.5 767.1,345.7 767.6,351.0 768.0,351.8 768.5,351.2 769.0,351.8 769.4,354.8 769.9,356.6 770.3,356.0 770.8,356.6 771.2,359.2 771.6,360.1 772.1,362.2 772.5,360.9 773.0,358.8 773.5,360.5 773.9,364.0 774.4,365.0 774.8,365.0 775.2,369.4 775.7,371.0 776.1,370.6 776.6,370.7 777.0,370.6 777.5,372.2 778.0,372.5 778.4,373.4 778.9,374.7 779.3,375.5 779.8,376.9 780.2,373.6 780.6,374.9 781.1,379.4 781.5,384.2 782.0,383.6 782.5,384.3 782.9,382.1 783.4,386.2 783.8,386.4 784.2,388.6 784.7,388.3 785.1,389.8 785.6,392.1 786.0,390.8 786.5,393.0 787.0,392.7 787.4,390.4 787.9,392.3 788.3,394.3 788.8,397.2 789.2,397.2 789.6,395.9 790.1,400.0 790.5,400.0 791.0,399.4 791.5,402.5 791.9,405.1 792.4,405.7 792.8,403.3 793.2,404.5 793.7,405.9 794.1,406.5 794.6,410.3 795.0,412.9 795.5,413.9 796.0,414.2 796.4,412.8 796.9,412.6 797.3,414.3 797.8,415.6 798.2,416.9 798.6,416.2 799.1,416.8 799.5,420.1 800.0,418.9 800.5,422.7 800.9,423.6 801.4,422.9 801.8,422.7 802.2,423.0 802.7,422.2 803.1,425.3 803.6,428.5 804.0,429.8 804.5,432.5 805.0,430.5 805.4,429.0 805.9,432.4 806.3,433.5 806.8,434.0 807.2,433.1 807.6,433.8 808.1,436.9 808.5,434.6 809.0,438.0 809.5,438.2 809.9,440.3 810.4,438.9 810.8,438.6 811.2,440.3 811.7,441.4 812.1,440.8 812.6,443.8 813.0,444.8 813.5,444.3 814.0,445.1 814.4,445.2 814.9,445.6 815.3,445.4 815.8,448.8 816.2,450.1 816.6,449.4 817.1,449.2 817.5,450.6 818.0,452.7 818.5,453.7 818.9,452.6 819.4,453.6 819.8,453.6 820.2,455.4 820.7,456.5 821.1,457.4 821.6,457.5 822.0,457.7 822.5,458.8 823.0,457.3 823.4,459.0 823.9,459.2 824.3,459.1 824.8,462.0 825.2,463.9 825.6,464.4 826.1,464.4 826.5,462.1 827.0,460.6 827.5,461.4 827.9,463.5 828.4,463.1 828.8,465.3 829.2,466.8 829.7,468.1 830.1,467.9 830.6,469.7 831.0,467.6 831.5,468.7 832.0,469.8 832.4,469.3 832.9,471.1 833.3,474.9 833.8,475.0 834.2,472.5 834.6,474.9 835.1,475.5 835.5,473.9 836.0,475.1 836.5,478.2 836.9,474.9 837.4,477.1 837.8,476.1 838.2,478.9 838.7,478.9 839.1,477.2 839.6,481.2 840.0,481.6 840.5,481.6 841.0,480.4 841.4,482.5 841.9,480.8 842.3,483.9 842.8,483.9 843.2,483.7 843.6,482.3 844.1,483.7 844.5,486.3 845.0,486.6 845.5,484.8 845.9,482.5 846.4,482.6 846.8,484.0 847.2,486.4 847.7,488.1 848.1,488.4 848.6,485.7 849.0,491.1 849.5,487.9 850.0,489.5 850.4,488.3 850.9,488.0 851.3,488.7 851.8,490.3 852.2,491.5 852.6,488.2 853.1,488.8 853.5,493.1 854.0,494.4 854.5,488.1 854.9,491.3 855.4,493.8 855.8,491.2 856.2,488.5 856.7,491.1 857.1,491.9 857.6,491.5 858.0,493.9 858.5,493.6 859.0,495.2 859.4,497.2 859.9,494.5 860.3,490.2 860.8,494.3 861.2,494.9 861.6,492.2 862.1,495.7 862.5,496.1 863.0,496.6 863.5,495.8 863.9,497.5 864.4,497.2 864.8,496.4 865.2,499.0 865.7,494.1 866.1,497.9 866.6,496.8 867.0,495.8 867.5,496.4 868.0,496.0 868.4,498.2 868.9,495.6 869.3,494.0 869.8,496.2 870.2,497.9 870.6,499.1 871.1,495.6 871.5,499.8 872.0,497.5 872.5,501.2 872.9,498.7 873.4,498.7 873.8,495.7 874.2,499.9 874.7,500.3 875.1,498.2 875.6,498.6 876.0,497.3 876.5,496.2 877.0,498.0 877.4,498.1 877.9,499.7 878.3,498.4 878.8,500.4 879.2,501.7 879.6,500.2 880.1,500.0 880.5,498.5 881.0,496.0 881.5,496.6 881.9,497.8 882.4,497.3 882.8,499.7 883.2,498.1 883.7,495.2 884.1,498.9 884.6,496.0 885.0,498.6 885.5,499.0 886.0,496.6 886.4,497.6 886.9,496.7 887.3,495.4 887.8,497.1 888.2,495.5 888.6,495.4 889.1,497.4 889.5,494.4 890.0,494.3 890.5,493.1 890.9,496.7 891.4,494.4 891.8,495.5 892.2,494.7 892.7,493.9 893.1,493.6 893.6,494.7 894.0,493.3 894.5,495.6 895.0,495.6 895.4,492.8 895.9,494.9 896.3,493.6 896.8,493.2 897.2,492.7 897.6,492.9 898.1,492.5 898.5,491.6 899.0,491.8 899.5,493.4 899.9,490.9 900.4,490.3 900.8,491.7 901.2,488.4 901.7,489.3 902.1,489.0 902.6,490.9 903.0,490.3 903.5,487.6 904.0,488.9 904.4,491.4 904.9,485.2 905.3,484.4 905.8,489.6 906.2,488.5 906.6,488.0 907.1,485.1 907.5,485.5 908.0,484.8 908.5,485.5 908.9,483.6 909.4,483.9 909.8,483.3 910.2,484.8 910.7,483.1 911.1,478.8 911.6,480.4 912.0,482.6 912.5,479.2 913.0,478.5 913.4,481.1 913.9,481.4 914.3,481.9 914.8,480.0 915.2,479.4 915.6,477.0 916.1,478.0 916.5,477.6 917.0,479.3 917.5,476.3 917.9,474.3 918.4,475.2 918.8,474.7 919.2,474.9 919.7,473.9 920.1,470.5 920.6,470.5 921.0,471.2 921.5,470.5 922.0,470.1 922.4,471.9 922.9,471.3 923.3,471.8 923.8,467.7 924.2,465.0 924.6,463.8 925.1,465.7 925.5,466.0 926.0,465.7 926.5,466.3 926.9,464.1 927.4,461.9 927.8,463.7 928.2,463.0 928.7,461.5 929.1,459.8 929.6,459.0 930.0,459.3 930.5,459.8 931.0,458.9 931.4,455.8 931.9,457.9 932.3,456.5 932.8,455.2 933.2,454.9 933.6,453.8 934.1,454.3 934.5,452.6 935.0,449.9 935.5,448.1 935.9,452.0 936.4,450.7 936.8,449.3 937.2,447.6 937.7,446.8 938.1,446.7 938.6,446.3 939.0,445.5 939.5,445.5 940.0,442.8 940.4,443.0 940.9,441.9 941.3,439.7 941.8,442.2 942.2,441.3 942.6,438.4 943.1,438.7 943.5,439.4 944.0,436.3 944.5,435.7 944.9,436.9 945.4,432.9 945.8,432.5 946.2,434.9 946.7,433.8 947.1,432.2 947.6,431.0 948.0,428.9 948.5,430.3 949.0,427.7 949.4,427.2 949.9,425.8 950.3,425.1 950.8,422.4 951.2,423.2 951.6,422.3 952.1,421.9 952.5,422.0 953.0,422.1 953.5,420.4 953.9,421.0 954.4,417.9 954.8,417.0 955.2,413.6 955.7,416.1 956.1,414.7 956.6,409.0 957.0,414.0 957.5,411.4 958.0,410.4 958.4,408.7 958.9,407.4 959.3,408.3 959.8,408.6 960.2,408.0 960.6,405.2 961.1,404.8 961.5,403.3 962.0,402.5 962.5,401.3 962.9,401.3 963.4,399.7 963.8,397.7 964.2,395.0 964.7,395.7 965.1,395.6 965.6,394.4 966.0,397.4 966.5,392.9 967.0,390.2 967.4,392.4 967.9,390.0 968.3,388.5 968.8,385.7 969.2,387.5 969.6,385.4 970.1,383.0 970.5,384.6 971.0,385.3 971.5,380.8 971.9,380.9 972.4,381.3 972.8,379.8 973.2,379.6 973.7,377.9 974.1,375.8 974.6,374.3 975.0,372.7 975.5,369.8 976.0,371.2 976.4,372.3 976.9,371.4 977.3,369.1 977.8,371.3 978.2,367.2 978.6,365.8 979.1,364.2 979.5,364.3 980.0,363.7 980.5,361.6 980.9,362.8 981.4,360.9 981.8,359.8 982.2,357.2 982.7,357.2 983.1,355.9 983.6,354.4 984.0,355.1 984.5,351.5"/><rect x="311" y="339" width="11" height="11" fill="#f7941d"/><circle cx="541.5" cy="344.4" r="5.5" fill="#f7941d"/><path d="M529.5 108.5h10l-5 5z M529.5 604.5h10l-5 -5z" fill="#f9a21e"/><path d="M988 356.8L993.2 352.3V361.3Z" fill="#58e032"/><path d="M993 356.8H997.4V366.4 M994.2 366.6h6.6 M995.4 368.9h4.2 M996.4 371h2.2" stroke="#58e032" stroke-width="1.5" fill="none"/><text x="999.6" y="364.6" font-family="Liberation Sans,sans-serif" font-size="12.5" fill="#58e032">2</text><text x="1006.5" y="358.4" font-family="Liberation Sans,sans-serif" font-weight="bold" font-size="11" fill="#58e032">T</text></svg>
<div class="a" style="left:78px;top:609.5px;width:941px;height:63.5px;background:#f0f0f0;"></div>
<div class="a" style="left:81px;top:616px;width:14px;height:17px;background:#fff;border-left:1px solid #8c8c8c;border-top:1px solid #8c8c8c;border-right:1px solid #fff;border-bottom:1px solid #fff"></div>
<div class="btn" style="left:103px;top:615px;width:25px;height:12px;"></div>
<div class="btn" style="left:103px;top:630px;width:25px;height:12px;"></div>
<div class="btn" style="left:131px;top:615px;width:18px;height:27px;"></div>
<div class="btn" style="left:167px;top:615px;width:25px;height:27px;"></div>
<div class="btn" style="left:194px;top:615px;width:25px;height:27px;border-color:#2c77b4;background:linear-gradient(#dff1fb 0%,#c4e3f6 48%,#a4d3f0 52%,#8cc6ea 100%);box-shadow:inset 0 0 0 1px #e9f6fd"></div>
<div class="btn" style="left:221px;top:615px;width:25px;height:27px;"></div>
<div class="btn" style="left:260px;top:615px;width:25px;height:27px;"></div>
<div class="btn" style="left:287px;top:615px;width:25px;height:27px;"></div>
<div class="btn" style="left:314px;top:615px;width:25px;height:27px;"></div>
<div class="btn" style="left:354px;top:615px;width:23px;height:27px;"></div>
<div class="a" style="left:356px;top:618px;width:18px;height:20px;background:#000;"></div>
<span class="t" style="left:358.70px;top:616px;font-size:20.6px;color:#fff;font-family:'Liberation Sans',sans-serif;line-height:23px;transform:scaleX(0.8539);transform-origin:0 0;-webkit-text-stroke:0.45px #fff;">H</span>
<div class="a" style="left:381px;top:615px;width:98px;height:29px;background:#000;"></div>
<span class="t" style="left:387.80px;top:618px;font-size:15.9px;color:#f4f4f4;font-family:'Liberation Sans',sans-serif;line-height:17px;transform:scaleX(0.9846);transform-origin:0 0;">10.0 ns/</span>
<div class="btn" style="left:483px;top:615px;width:18px;height:28px;"></div>
<div class="btn" style="left:503px;top:615px;width:19px;height:28px;"></div>
<div class="a" style="left:527px;top:616px;width:15px;height:17px;background:#f7941d;border-left:1px solid #b86a10;border-top:1px solid #b86a10"></div>
<div class="a" style="left:548px;top:615px;width:147px;height:29px;background:#000;"></div>
<span class="t" style="left:553.70px;top:618px;font-size:15.9px;color:#f4f4f4;font-family:'Liberation Sans',sans-serif;line-height:17px;transform:scaleX(1.0066);transform-origin:0 0;">0.0 s</span>
<div class="btn" style="left:699px;top:614px;width:18px;height:29px;"></div>
<div class="btn" style="left:719px;top:614px;width:19px;height:29px;"></div>
<div class="btn" style="left:740px;top:614px;width:19px;height:29px;"></div>
<span class="t" style="left:724.3px;top:620px;font-size:15px;color:#000;font-family:'Liberation Sans',sans-serif;transform:scaleX(1.0309);transform-origin:0 0;line-height:17px;-webkit-text-stroke:0.4px #000;">0</span>
<div class="btn" style="left:826px;top:615px;width:25px;height:27px;"></div>
<div class="a" style="left:829px;top:618px;width:18px;height:20px;background:#041004;"></div>
<span class="t" style="left:832.00px;top:616px;font-size:20.6px;color:#62dc4e;font-family:'Liberation Sans',sans-serif;line-height:23px;transform:scaleX(0.9613);transform-origin:0 0;-webkit-text-stroke:0.45px #62dc4e;">T</span>
<div class="a" style="left:854px;top:615px;width:86px;height:29px;background:#000;"></div>
<span class="t" style="left:860.40px;top:618px;font-size:15.9px;color:#5fd24a;font-family:'Liberation Sans',sans-serif;line-height:17px;transform:scaleX(0.9989);transform-origin:0 0;">10 mV</span>
<div class="btn" style="left:943px;top:615px;width:26px;height:13px;"></div>
<div class="btn" style="left:943px;top:630px;width:26px;height:14px;"></div>
<div class="a" style="left:977px;top:616px;width:15px;height:17px;background:#fff;border-left:1px solid #8c8c8c;border-top:1px solid #8c8c8c;border-right:1px solid #fff;border-bottom:1px solid #fff"></div>
<svg class="a" style="left:0;top:600px" width="1026" height="60" viewBox="0 600 1026 60"><path d="M88 630V620.5 M85.2 623.6L88 619.8L90.8 623.6" stroke="#000" stroke-width="1.3" fill="none"/><g stroke="#333" stroke-width="1.1" fill="none"><path d="M112 620.5l3.5-3 3.5 3 M112 623.7l3.5-3 3.5 3"/><path d="M112 633l3.5 3 3.5-3 M112 636.2l3.5 3 3.5-3"/><path d="M136.5 621.5l3.5-3 3.5 3 M136.5 624.7l3.5-3 3.5 3"/><path d="M136.5 632.5l3.5 3 3.5-3 M136.5 635.7l3.5 3 3.5-3"/></g><polygon points="187.07,631.48 182.58,635.97 176.22,635.97 171.73,631.48 171.73,625.12 176.22,620.63 182.58,620.63 187.07,625.12" fill="#13b3b3" stroke="#1a1a1a" stroke-width="0.9"/><polygon points="214.27,631.48 209.78,635.97 203.42,635.97 198.93,631.48 198.93,625.12 203.42,620.63 209.78,620.63 214.27,625.12" fill="#f01010" stroke="#1a1a1a" stroke-width="0.9"/><polygon points="241.27,631.48 236.78,635.97 230.42,635.97 225.93,631.48 225.93,625.12 230.42,620.63 236.78,620.63 241.27,625.12" fill="#f7f020" stroke="#1a1a1a" stroke-width="0.9"/><rect x="264.3" y="620.3" width="16.4" height="16.4" fill="#fff" stroke="#000" stroke-width="1.2"/><path d="M280.7 626.5V636.7H270.5Z" fill="#555"/><path d="M266.5 629.5C266.5 624 272.5 622.5 276 626.5" stroke="#000" stroke-width="1.3" fill="none"/><path d="M277.8 628.6L273.6 627.6L277 624.4Z" fill="#000"/><path d="M292.5 629.5L299.5 624.5L309 627.5L302 633Z" fill="#b8b8b8" stroke="#444" stroke-width="0.8"/><path d="M292.5 629.5V634L302 637.8V633Z" fill="#8a8a8a" stroke="#444" stroke-width="0.8"/><path d="M302 633L309 627.5V632L302 637.8Z" fill="#6a6a6a" stroke="#444" stroke-width="0.8"/><path d="M297.5 626L301.5 619.5L308 621.5L305 628.3Z" fill="#fff" stroke="#666" stroke-width="0.7"/><path d="M295 631.5L300.5 633.7 M295 633.2L300.5 635.4" stroke="#333" stroke-width="0.7"/><path d="M332.80 628.50L336.50 628.50M330.95 632.95L333.57 635.57M326.50 634.80L326.50 638.50M322.05 632.95L319.43 635.57M320.20 628.50L316.50 628.50M322.05 624.05L319.43 621.43M326.50 622.20L326.50 618.50M330.95 624.05L333.57 621.43" stroke="#222" stroke-width="1.2" fill="none"/><circle cx="326.5" cy="628.5" r="4.6" fill="#f5ee2e" stroke="#555" stroke-width="0.8"/><path d="M489 629C489 623 491.8 623 492 629S495 635 495 629" stroke="#000" stroke-width="1.1" fill="none"/><path d="M507 629C507 623 512.3 623 512.5 629S518 635 518 629" stroke="#000" stroke-width="1.1" fill="none"/><path d="M534.7 630V620.5 M531.9 623.6L534.7 619.8L537.5 623.6" stroke="#000" stroke-width="1.3" fill="none"/><path d="M704.5 628.5L711 622.5V634.5Z M754 628.5L747.5 622.5V634.5Z" fill="#000"/><path d="M950 624.5L956 619L962 624.5Z M950 634.5L956 640L962 634.5Z" fill="#000"/><path d="M984.5 630V620.5 M981.7 623.6L984.5 619.8L987.3 623.6" stroke="#000" stroke-width="1.3" fill="none"/></svg>
<div class="a" style="left:82.5px;top:650px;width:112px;height:24px;background:#2e2e2e;border:2.5px solid #f0962a;border-bottom:none;border-right-color:#c8801f"></div>
<span class="t" style="left:89px;top:654px;font-size:15.6px;color:#ececec;font-family:'Liberation Sans',sans-serif;transform:scaleX(0.9838);transform-origin:0 0;line-height:17px;">Measurements</span>
<span class="t" style="left:202px;top:654px;font-size:15.6px;color:#000;font-family:'Liberation Sans',sans-serif;transform:scaleX(0.9851);transform-origin:0 0;line-height:17px;">Markers</span>
<span class="t" style="left:271px;top:654px;font-size:15.6px;color:#000;font-family:'Liberation Sans',sans-serif;transform:scaleX(0.9921);transform-origin:0 0;line-height:17px;">Logic</span>
<span class="t" style="left:322.5px;top:654px;font-size:15.6px;color:#000;font-family:'Liberation Sans',sans-serif;transform:scaleX(0.9836);transform-origin:0 0;line-height:17px;">Status</span>
<span class="t" style="left:378px;top:654px;font-size:15.6px;color:#000;font-family:'Liberation Sans',sans-serif;transform:scaleX(0.9290);transform-origin:0 0;line-height:17px;">Scales</span>
<div class="a" style="left:195.0px;top:651.5px;width:1px;height:22.5px;background:#fdfdfd;"></div>
<div class="a" style="left:196.0px;top:651.5px;width:1.5px;height:22.5px;background:#808080;"></div>
<div class="a" style="left:261.0px;top:651.5px;width:1px;height:22.5px;background:#fdfdfd;"></div>
<div class="a" style="left:262.0px;top:651.5px;width:1.5px;height:22.5px;background:#808080;"></div>
<div class="a" style="left:313.5px;top:651.5px;width:1px;height:22.5px;background:#fdfdfd;"></div>
<div class="a" style="left:314.5px;top:651.5px;width:1.5px;height:22.5px;background:#808080;"></div>
<div class="a" style="left:370.0px;top:651.5px;width:1px;height:22.5px;background:#fdfdfd;"></div>
<div class="a" style="left:371.0px;top:651.5px;width:1.5px;height:22.5px;background:#808080;"></div>
<div class="a" style="left:424.5px;top:651.5px;width:1px;height:22.5px;background:#fdfdfd;"></div>
<div class="a" style="left:425.5px;top:651.5px;width:1.5px;height:22.5px;background:#808080;"></div>
<div class="a" style="left:78px;top:674px;width:944px;height:92px;background:#2e2e2e;"></div>
<div class="a" style="left:78px;top:675px;width:17px;height:91px;background:#f0f0f0;"></div>
<svg class="a" style="left:78px;top:675px" width="17" height="91" viewBox="0 0 17 91"><path d="M5.2 11L9 7.2L12.8 11Z M5.2 81L9 84.8L12.8 81Z" fill="#444"/></svg>
<div class="btn" style="left:79px;top:693px;width:15px;height:15px;border-radius:2px;background:linear-gradient(90deg,#f6f6f6 0%,#e6e6e6 50%,#c4c4c4 100%)"></div>
<span class="t" style="left:178.2px;top:694px;font-size:15px;color:#ececec;font-family:'DejaVu Sans Mono','Liberation Mono',monospace;line-height:18px;letter-spacing:-0.03px;">Current</span>
<span class="t" style="left:268.2px;top:694px;font-size:15px;color:#ececec;font-family:'DejaVu Sans Mono','Liberation Mono',monospace;line-height:18px;letter-spacing:-0.03px;">2.57436 V</span>
<span class="t" style="left:412.2px;top:694px;font-size:15px;color:#ececec;font-family:'DejaVu Sans Mono','Liberation Mono',monospace;line-height:18px;letter-spacing:-0.03px;">49.76791 ns</span>
<span class="t" style="left:556.2px;top:694px;font-size:15px;color:#ececec;font-family:'DejaVu Sans Mono','Liberation Mono',monospace;line-height:18px;letter-spacing:-0.03px;">20.093268 MHz</span>
<span class="t" style="left:700.2px;top:694px;font-size:15px;color:#ececec;font-family:'DejaVu Sans Mono','Liberation Mono',monospace;line-height:18px;letter-spacing:-0.03px;">13.83620 ns</span>
<span class="t" style="left:844.2px;top:694px;font-size:15px;color:#ececec;font-family:'DejaVu Sans Mono','Liberation Mono',monospace;line-height:18px;letter-spacing:-0.03px;">14.74056 ns</span>
<span class="t" style="left:205.2px;top:712px;font-size:15px;color:#ececec;font-family:'DejaVu Sans Mono','Liberation Mono',monospace;line-height:18px;letter-spacing:-0.03px;">Mean</span>
<span class="t" style="left:268.2px;top:712px;font-size:15px;color:#ececec;font-family:'DejaVu Sans Mono','Liberation Mono',monospace;line-height:18px;letter-spacing:-0.03px;">2.57436 V</span>
<span class="t" style="left:412.2px;top:712px;font-size:15px;color:#ececec;font-family:'DejaVu Sans Mono','Liberation Mono',monospace;line-height:18px;letter-spacing:-0.03px;">49.76791 ns</span>
<span class="t" style="left:556.2px;top:712px;font-size:15px;color:#ececec;font-family:'DejaVu Sans Mono','Liberation Mono',monospace;line-height:18px;letter-spacing:-0.03px;">20.093268 MHz</span>
<span class="t" style="left:700.2px;top:712px;font-size:15px;color:#ececec;font-family:'DejaVu Sans Mono','Liberation Mono',monospace;line-height:18px;letter-spacing:-0.03px;">13.83620 ns</span>
<span class="t" style="left:844.2px;top:712px;font-size:15px;color:#ececec;font-family:'DejaVu Sans Mono','Liberation Mono',monospace;line-height:18px;letter-spacing:-0.03px;">14.74056 ns</span>
<span class="t" style="left:214.2px;top:730px;font-size:15px;color:#ececec;font-family:'DejaVu Sans Mono','Liberation Mono',monospace;line-height:18px;letter-spacing:-0.03px;">Min</span>
<span class="t" style="left:268.2px;top:730px;font-size:15px;color:#ececec;font-family:'DejaVu Sans Mono','Liberation Mono',monospace;line-height:18px;letter-spacing:-0.03px;">2.57436 V</span>
<span class="t" style="left:412.2px;top:730px;font-size:15px;color:#ececec;font-family:'DejaVu Sans Mono','Liberation Mono',monospace;line-height:18px;letter-spacing:-0.03px;">49.76791 ns</span>
<span class="t" style="left:556.2px;top:730px;font-size:15px;color:#ececec;font-family:'DejaVu Sans Mono','Liberation Mono',monospace;line-height:18px;letter-spacing:-0.03px;">20.093268 MHz</span>
<span class="t" style="left:700.2px;top:730px;font-size:15px;color:#ececec;font-family:'DejaVu Sans Mono','Liberation Mono',monospace;line-height:18px;letter-spacing:-0.03px;">13.83620 ns</span>
<span class="t" style="left:844.2px;top:730px;font-size:15px;color:#ececec;font-family:'DejaVu Sans Mono','Liberation Mono',monospace;line-height:18px;letter-spacing:-0.03px;">14.74056 ns</span>
<span class="t" style="left:214.2px;top:748px;font-size:15px;color:#ececec;font-family:'DejaVu Sans Mono','Liberation Mono',monospace;line-height:18px;letter-spacing:-0.03px;">Max</span>
<span class="t" style="left:268.2px;top:748px;font-size:15px;color:#ececec;font-family:'DejaVu Sans Mono','Liberation Mono',monospace;line-height:18px;letter-spacing:-0.03px;">2.57436 V</span>
<span class="t" style="left:412.2px;top:748px;font-size:15px;color:#ececec;font-family:'DejaVu Sans Mono','Liberation Mono',monospace;line-height:18px;letter-spacing:-0.03px;">49.76791 ns</span>
<span class="t" style="left:556.2px;top:748px;font-size:15px;color:#ececec;font-family:'DejaVu Sans Mono','Liberation Mono',monospace;line-height:18px;letter-spacing:-0.03px;">20.093268 MHz</span>
<span class="t" style="left:700.2px;top:748px;font-size:15px;color:#ececec;font-family:'DejaVu Sans Mono','Liberation Mono',monospace;line-height:18px;letter-spacing:-0.03px;">13.83620 ns</span>
<span class="t" style="left:844.2px;top:748px;font-size:15px;color:#ececec;font-family:'DejaVu Sans Mono','Liberation Mono',monospace;line-height:18px;letter-spacing:-0.03px;">14.74056 ns</span>
<span class="t" style="left:277.2px;top:677px;font-size:15px;color:#f0962a;font-family:'DejaVu Sans Mono','Liberation Mono',monospace;line-height:18px;letter-spacing:-0.03px;">V p-p(</span>
<span class="t" style="left:331.2px;top:677px;font-size:15px;color:#5fdc40;font-family:'DejaVu Sans Mono','Liberation Mono',monospace;line-height:18px;letter-spacing:-0.03px;">2</span>
<span class="t" style="left:340.2px;top:677px;font-size:15px;color:#f0962a;font-family:'DejaVu Sans Mono','Liberation Mono',monospace;line-height:18px;letter-spacing:-0.03px;">)</span>
<span class="t" style="left:412.2px;top:677px;font-size:15px;color:#ececec;font-family:'DejaVu Sans Mono','Liberation Mono',monospace;line-height:18px;letter-spacing:-0.03px;">Period(</span><span class="t" style="left:475.2px;top:677px;font-size:15px;color:#5fdc40;font-family:'DejaVu Sans Mono','Liberation Mono',monospace;line-height:18px;letter-spacing:-0.03px;">2</span><span class="t" style="left:485.3px;top:680px;font-size:11.5px;color:#f0962a;font-family:'DejaVu Sans Mono','Liberation Mono',monospace;line-height:14px;">■</span><span class="t" style="left:493.2px;top:677px;font-size:15px;color:#ececec;font-family:'DejaVu Sans Mono','Liberation Mono',monospace;line-height:18px;letter-spacing:-0.03px;">)</span>
<span class="t" style="left:547.2px;top:677px;font-size:15px;color:#ececec;font-family:'DejaVu Sans Mono','Liberation Mono',monospace;line-height:18px;letter-spacing:-0.03px;">Frequency(</span><span class="t" style="left:637.2px;top:677px;font-size:15px;color:#5fdc40;font-family:'DejaVu Sans Mono','Liberation Mono',monospace;line-height:18px;letter-spacing:-0.03px;">2</span><span class="t" style="left:646.2px;top:677px;font-size:15px;color:#f0962a;font-family:'DejaVu Sans Mono','Liberation Mono',monospace;line-height:18px;letter-spacing:-0.03px;">▼</span><span class="t" style="left:655.2px;top:677px;font-size:15px;color:#ececec;font-family:'DejaVu Sans Mono','Liberation Mono',monospace;line-height:18px;letter-spacing:-0.03px;">)</span>
<span class="t" style="left:691.2px;top:677px;font-size:15px;color:#ececec;font-family:'DejaVu Sans Mono','Liberation Mono',monospace;line-height:18px;letter-spacing:-0.03px;">Rise time(</span><span class="t" style="left:781.2px;top:677px;font-size:15px;color:#5fdc40;font-family:'DejaVu Sans Mono','Liberation Mono',monospace;line-height:18px;letter-spacing:-0.03px;">2</span><span class="t" style="left:791.5px;top:679.5px;font-size:10.5px;color:#f0962a;font-family:'DejaVu Sans Mono','Liberation Mono',monospace;line-height:12px;">●</span><span class="t" style="left:799.2px;top:677px;font-size:15px;color:#ececec;font-family:'DejaVu Sans Mono','Liberation Mono',monospace;line-height:18px;letter-spacing:-0.03px;">)</span>
<span class="t" style="left:835.2px;top:677px;font-size:15px;color:#ececec;font-family:'DejaVu Sans Mono','Liberation Mono',monospace;line-height:18px;letter-spacing:-0.03px;">Fall time(</span><span class="t" style="left:925.2px;top:677px;font-size:15px;color:#5fdc40;font-family:'DejaVu Sans Mono','Liberation Mono',monospace;line-height:18px;letter-spacing:-0.03px;">2</span><span class="t" style="left:934.2px;top:677px;font-size:15px;color:#f0962a;font-family:'DejaVu Sans Mono','Liberation Mono',monospace;line-height:18px;letter-spacing:-0.03px;">♦</span><span class="t" style="left:943.2px;top:677px;font-size:15px;color:#ececec;font-family:'DejaVu Sans Mono','Liberation Mono',monospace;line-height:18px;letter-spacing:-0.03px;">)</span>
</body></html>
